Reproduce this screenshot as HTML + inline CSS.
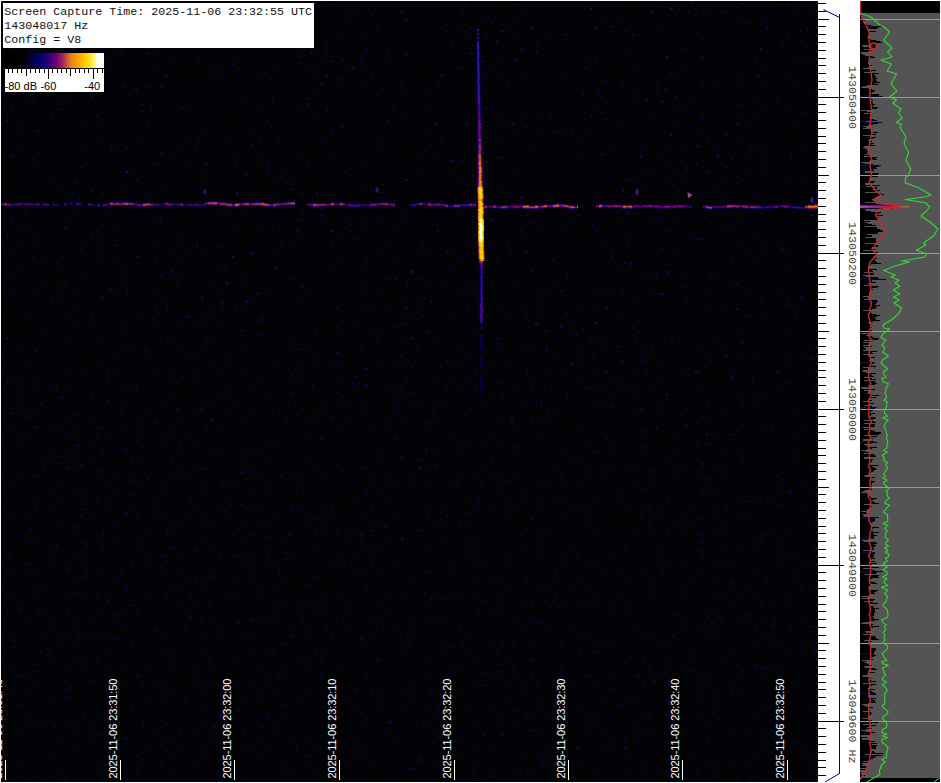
<!DOCTYPE html>
<html lang="en"><head><meta charset="utf-8"><title>Spectrogram capture</title>
<style>
html,body{margin:0;padding:0;background:#fff;}
body{width:941px;height:783px;overflow:hidden;position:relative;}
svg{position:absolute;left:0;top:0;display:block;}
.mono{font-family:"Liberation Mono","DejaVu Sans Mono",monospace;font-size:11.67px;fill:#111;}
.sans{font-family:"Liberation Sans","DejaVu Sans",sans-serif;font-size:11px;}
</style></head><body>
<svg width="941" height="783" viewBox="0 0 941 783">
<defs>
<linearGradient id="pal" x1="0" y1="0" x2="1" y2="0">
<stop offset="0" stop-color="#000"/><stop offset="0.19" stop-color="#020208"/>
<stop offset="0.345" stop-color="#00006e"/><stop offset="0.445" stop-color="#300078"/>
<stop offset="0.525" stop-color="#780078"/><stop offset="0.595" stop-color="#aa3250"/>
<stop offset="0.66" stop-color="#e6781e"/><stop offset="0.73" stop-color="#ffa000"/>
<stop offset="0.85" stop-color="#ffe100"/><stop offset="0.91" stop-color="#fff596"/>
<stop offset="0.94" stop-color="#fff"/><stop offset="1" stop-color="#fff"/>
</linearGradient>
<clipPath id="spc"><rect x="1" y="1" width="817" height="781"/></clipPath>
<clipPath id="pnl"><rect x="860" y="1" width="80" height="781"/></clipPath>
<filter id="noise" x="0" y="0" width="100%" height="100%" color-interpolation-filters="sRGB">
<feTurbulence type="fractalNoise" baseFrequency="0.2 0.27" numOctaves="2" seed="11" result="t"/>
<feColorMatrix in="t" type="matrix" values="0 0 0 0 0.07  0 0 0 0 0.07  0 0 0 0 0.56  0 0 4.2 0 -2.9"/>
</filter>
<filter id="haze" x="0" y="0" width="100%" height="100%" color-interpolation-filters="sRGB">
<feTurbulence type="fractalNoise" baseFrequency="0.17 0.24" numOctaves="2" seed="4" result="t"/>
<feColorMatrix in="t" type="matrix" values="0 0 0 0 0.05  0 0 0 0 0.05  0 0 0 0 0.5  0 0 1.9 0 -1.2"/>
</filter>
<linearGradient id="fade" x1="0" y1="0" x2="0" y2="1"><stop offset="0" stop-color="#fff"/><stop offset="0.42" stop-color="#fff"/><stop offset="0.75" stop-color="#777"/><stop offset="1" stop-color="#555"/></linearGradient>
<linearGradient id="fade2" x1="0" y1="0" x2="0" y2="1"><stop offset="0" stop-color="#666"/><stop offset="0.4" stop-color="#777"/><stop offset="0.75" stop-color="#fff"/><stop offset="1" stop-color="#fff"/></linearGradient>
<mask id="fm2" maskUnits="userSpaceOnUse" x="0" y="0" width="941" height="783"><rect x="1" y="1" width="817" height="781" fill="url(#fade2)"/></mask>
<mask id="fm" maskUnits="userSpaceOnUse" x="0" y="0" width="941" height="783"><rect x="1" y="1" width="817" height="781" fill="url(#fade)"/></mask>
<filter id="b1" x="-20%" y="-20%" width="140%" height="140%"><feGaussianBlur stdDeviation="0.65"/></filter>
<filter id="b2" x="-50%" y="-5%" width="200%" height="110%"><feGaussianBlur stdDeviation="1.2"/></filter>
</defs>
<rect x="1" y="1" width="817" height="781" fill="#030306"/>
<g clip-path="url(#spc)">
<g mask="url(#fm2)"><rect x="1" y="1" width="817" height="781" filter="url(#haze)"/></g>
<g mask="url(#fm)"><rect x="1" y="1" width="817" height="781" filter="url(#noise)"/></g>
<g filter="url(#b1)" opacity="0.9"><rect x="1" y="202.72" width="3" height="3.32" fill="#0b0070"/><rect x="4" y="202.31" width="3" height="3.75" fill="#2c0077"/><rect x="7" y="203.15" width="3" height="3.44" fill="#140072"/><rect x="10" y="203.39" width="2" height="3.07" fill="#000062"/><rect x="12" y="203.33" width="3" height="2.76" fill="#010141"/><rect x="15" y="202.91" width="3" height="3.33" fill="#0c0070"/><rect x="18" y="202.47" width="3" height="3.35" fill="#0d0071"/><rect x="21" y="202.31" width="3" height="2.93" fill="#010153"/><rect x="24" y="202.67" width="3" height="3.16" fill="#00006c"/><rect x="27" y="202.77" width="3" height="3.23" fill="#04006f"/><rect x="30" y="202.96" width="3" height="3.05" fill="#000061"/><rect x="33" y="202.79" width="3" height="2.81" fill="#010147"/><rect x="36" y="202.85" width="3" height="3.31" fill="#0a0070"/><rect x="39" y="202.65" width="1" height="3.09" fill="#000064"/><rect x="40" y="202.96" width="3" height="2.62" fill="#010133"/><rect x="43" y="202.68" width="3" height="3.14" fill="#00006a"/><rect x="46" y="203.30" width="3" height="3.21" fill="#02006e"/><rect x="49" y="203.58" width="3" height="2.60" fill="#010125"/><rect x="52" y="203.10" width="3" height="2.87" fill="#01014d"/><rect x="55" y="203.68" width="3" height="2.81" fill="#010147"/><rect x="58" y="203.76" width="3" height="2.60" fill="#01012a"/><rect x="61" y="203.64" width="3" height="2.60" fill="#01012b"/><rect x="64" y="202.84" width="3" height="3.22" fill="#03006f"/><rect x="67" y="202.67" width="3" height="2.60" fill="#020220"/><rect x="70" y="202.14" width="3" height="2.91" fill="#010151"/><rect x="73" y="202.49" width="3" height="2.60" fill="#010127"/><rect x="76" y="202.25" width="3" height="3.24" fill="#05006f"/><rect x="79" y="202.78" width="3" height="2.79" fill="#010144"/><rect x="82" y="203.09" width="3" height="2.60" fill="#010128"/><rect x="85" y="203.34" width="3" height="2.60" fill="#01012f"/><rect x="88" y="202.72" width="3" height="3.27" fill="#07006f"/><rect x="91" y="203.28" width="3" height="2.92" fill="#010153"/><rect x="94" y="203.38" width="3" height="2.60" fill="#01012d"/><rect x="97" y="203.63" width="3" height="3.30" fill="#0a0070"/><rect x="100" y="204.03" width="3" height="2.60" fill="#01012b"/><rect x="103" y="203.22" width="3" height="3.27" fill="#07006f"/><rect x="106" y="202.82" width="3" height="2.97" fill="#000058"/><rect x="109" y="203.09" width="1" height="2.76" fill="#010141"/><rect x="110" y="201.76" width="3" height="3.95" fill="#460078"/><rect x="113" y="202.29" width="3" height="3.58" fill="#1f0074"/><rect x="116" y="202.03" width="3" height="3.79" fill="#2f0078"/><rect x="119" y="202.54" width="3" height="3.63" fill="#230075"/><rect x="122" y="201.93" width="3" height="3.78" fill="#2e0078"/><rect x="125" y="201.87" width="3" height="3.97" fill="#490078"/><rect x="128" y="202.04" width="3" height="3.66" fill="#250076"/><rect x="131" y="202.21" width="3" height="3.67" fill="#260076"/><rect x="134" y="202.78" width="3" height="3.36" fill="#0e0071"/><rect x="137" y="203.17" width="3" height="3.37" fill="#0f0071"/><rect x="140" y="203.41" width="3" height="3.30" fill="#090070"/><rect x="143" y="202.87" width="3" height="3.98" fill="#4a0078"/><rect x="146" y="202.49" width="3" height="3.90" fill="#3e0078"/><rect x="149" y="202.29" width="1" height="3.92" fill="#410078"/><rect x="150" y="202.88" width="3" height="3.56" fill="#1d0074"/><rect x="153" y="203.32" width="3" height="3.04" fill="#000060"/><rect x="156" y="203.20" width="3" height="3.04" fill="#00005f"/><rect x="159" y="203.34" width="3" height="2.87" fill="#01014d"/><rect x="162" y="202.63" width="3" height="2.94" fill="#000055"/><rect x="165" y="202.07" width="3" height="3.57" fill="#1e0074"/><rect x="168" y="202.73" width="3" height="3.54" fill="#1c0074"/><rect x="171" y="202.48" width="3" height="3.25" fill="#05006f"/><rect x="174" y="202.74" width="3" height="2.77" fill="#010143"/><rect x="177" y="203.04" width="3" height="3.06" fill="#000061"/><rect x="180" y="202.87" width="3" height="3.56" fill="#1d0074"/><rect x="183" y="203.47" width="3" height="2.84" fill="#01014a"/><rect x="186" y="203.16" width="3" height="2.84" fill="#01014a"/><rect x="189" y="203.27" width="3" height="3.20" fill="#02006e"/><rect x="192" y="203.36" width="3" height="2.78" fill="#010143"/><rect x="195" y="203.21" width="3" height="3.33" fill="#0c0070"/><rect x="198" y="203.45" width="3" height="3.05" fill="#000060"/><rect x="201" y="203.40" width="3" height="2.87" fill="#01014d"/><rect x="204" y="203.18" width="1" height="3.39" fill="#100071"/><rect x="205" y="201.64" width="3" height="3.51" fill="#190073"/><rect x="208" y="201.34" width="3" height="3.88" fill="#3b0078"/><rect x="211" y="201.22" width="3" height="3.97" fill="#480078"/><rect x="214" y="201.32" width="3" height="4.10" fill="#5b0078"/><rect x="217" y="201.79" width="3" height="3.43" fill="#130072"/><rect x="220" y="202.10" width="3" height="3.82" fill="#320078"/><rect x="223" y="202.11" width="3" height="3.76" fill="#2d0077"/><rect x="226" y="202.76" width="3" height="3.84" fill="#360078"/><rect x="229" y="203.11" width="3" height="3.88" fill="#3c0078"/><rect x="232" y="203.53" width="3" height="3.44" fill="#150072"/><rect x="235" y="202.79" width="3" height="4.19" fill="#690078"/><rect x="238" y="202.63" width="2" height="3.87" fill="#3b0078"/><rect x="240" y="202.67" width="3" height="3.34" fill="#0c0071"/><rect x="243" y="202.10" width="3" height="3.75" fill="#2c0077"/><rect x="246" y="202.19" width="3" height="3.91" fill="#400078"/><rect x="249" y="202.59" width="3" height="3.37" fill="#0f0071"/><rect x="252" y="202.39" width="3" height="3.67" fill="#260076"/><rect x="255" y="201.98" width="3" height="3.83" fill="#350078"/><rect x="258" y="202.17" width="3" height="3.80" fill="#300078"/><rect x="261" y="202.10" width="3" height="4.04" fill="#530078"/><rect x="264" y="202.64" width="3" height="3.99" fill="#4c0078"/><rect x="267" y="203.17" width="3" height="3.82" fill="#330078"/><rect x="270" y="203.42" width="3" height="3.31" fill="#0a0070"/><rect x="273" y="203.17" width="3" height="3.81" fill="#320078"/><rect x="276" y="202.63" width="3" height="3.63" fill="#230075"/><rect x="279" y="202.74" width="3" height="3.44" fill="#140072"/><rect x="282" y="202.19" width="3" height="3.44" fill="#140072"/><rect x="285" y="202.09" width="3" height="3.59" fill="#200075"/><rect x="288" y="201.59" width="3" height="3.74" fill="#2c0077"/><rect x="291" y="201.52" width="3" height="3.95" fill="#460078"/><rect x="294" y="201.30" width="1" height="3.96" fill="#470078"/><rect x="295" y="203.39" width="3" height="2.60" fill="#02020c"/><rect x="298" y="203.63" width="3" height="2.60" fill="#010130"/><rect x="307" y="202.70" width="3" height="3.33" fill="#0c0070"/><rect x="310" y="203.44" width="3" height="3.24" fill="#05006f"/><rect x="313" y="203.01" width="3" height="3.99" fill="#4b0078"/><rect x="316" y="203.16" width="3" height="3.78" fill="#2f0078"/><rect x="319" y="203.16" width="3" height="3.59" fill="#200075"/><rect x="322" y="202.86" width="3" height="3.69" fill="#280076"/><rect x="325" y="203.05" width="3" height="3.36" fill="#0e0071"/><rect x="328" y="202.93" width="3" height="3.31" fill="#0a0070"/><rect x="331" y="202.07" width="3" height="3.96" fill="#470078"/><rect x="334" y="202.77" width="3" height="3.23" fill="#04006f"/><rect x="337" y="202.48" width="3" height="3.19" fill="#01006e"/><rect x="340" y="202.30" width="3" height="3.88" fill="#3c0078"/><rect x="343" y="202.25" width="2" height="3.33" fill="#0c0070"/><rect x="345" y="203.41" width="3" height="2.77" fill="#010143"/><rect x="348" y="203.42" width="3" height="3.36" fill="#0e0071"/><rect x="351" y="203.84" width="3" height="3.29" fill="#090070"/><rect x="354" y="204.13" width="3" height="3.27" fill="#07006f"/><rect x="357" y="203.55" width="3" height="3.35" fill="#0d0071"/><rect x="360" y="203.63" width="3" height="2.79" fill="#010144"/><rect x="363" y="203.56" width="3" height="3.03" fill="#00005f"/><rect x="366" y="203.94" width="3" height="2.81" fill="#010147"/><rect x="369" y="203.43" width="1" height="2.86" fill="#01014c"/><rect x="370" y="203.25" width="3" height="3.54" fill="#1c0074"/><rect x="373" y="202.94" width="3" height="3.63" fill="#230075"/><rect x="376" y="202.86" width="3" height="3.30" fill="#090070"/><rect x="379" y="202.41" width="3" height="3.42" fill="#130072"/><rect x="382" y="202.11" width="3" height="3.61" fill="#210075"/><rect x="385" y="202.38" width="3" height="3.76" fill="#2d0077"/><rect x="388" y="202.88" width="3" height="3.26" fill="#06006f"/><rect x="391" y="202.87" width="3" height="3.43" fill="#140072"/><rect x="394" y="203.17" width="1" height="3.67" fill="#260076"/><rect x="395" y="203.68" width="3" height="2.60" fill="#020211"/><rect x="398" y="203.75" width="3" height="2.60" fill="#020207"/><rect x="404" y="204.32" width="3" height="2.60" fill="#020207"/><rect x="410" y="203.74" width="3" height="3.02" fill="#00005d"/><rect x="413" y="203.46" width="3" height="3.18" fill="#00006e"/><rect x="416" y="202.88" width="3" height="2.99" fill="#00005a"/><rect x="419" y="202.08" width="3" height="3.73" fill="#2b0077"/><rect x="422" y="202.25" width="3" height="3.06" fill="#000061"/><rect x="425" y="202.78" width="3" height="3.01" fill="#00005c"/><rect x="428" y="202.59" width="3" height="3.79" fill="#300078"/><rect x="431" y="203.26" width="3" height="3.27" fill="#070070"/><rect x="434" y="202.87" width="3" height="3.37" fill="#0f0071"/><rect x="437" y="202.87" width="3" height="3.53" fill="#1b0074"/><rect x="440" y="203.13" width="3" height="3.16" fill="#00006c"/><rect x="443" y="203.03" width="2" height="3.26" fill="#07006f"/><rect x="445" y="204.00" width="3" height="3.68" fill="#270076"/><rect x="448" y="204.53" width="3" height="2.94" fill="#010154"/><rect x="451" y="204.37" width="3" height="2.95" fill="#000055"/><rect x="454" y="204.00" width="3" height="3.68" fill="#270076"/><rect x="457" y="203.97" width="3" height="3.72" fill="#2a0077"/><rect x="460" y="203.61" width="3" height="3.17" fill="#00006d"/><rect x="463" y="203.58" width="3" height="3.32" fill="#0b0070"/><rect x="466" y="203.38" width="3" height="3.13" fill="#000069"/><rect x="469" y="203.02" width="3" height="3.58" fill="#1f0074"/><rect x="472" y="203.23" width="3" height="3.45" fill="#150072"/><rect x="475" y="202.79" width="1" height="3.74" fill="#2b0077"/><rect x="484" y="204.99" width="3" height="3.68" fill="#260076"/><rect x="487" y="205.05" width="3" height="3.08" fill="#000064"/><rect x="490" y="205.25" width="3" height="3.18" fill="#00006e"/><rect x="493" y="204.79" width="3" height="3.78" fill="#2f0078"/><rect x="496" y="205.37" width="3" height="3.18" fill="#00006e"/><rect x="499" y="205.50" width="3" height="3.37" fill="#0f0071"/><rect x="502" y="205.39" width="3" height="3.87" fill="#3a0078"/><rect x="505" y="205.11" width="3" height="3.62" fill="#220075"/><rect x="508" y="205.37" width="3" height="3.05" fill="#000061"/><rect x="511" y="204.87" width="3" height="3.35" fill="#0d0071"/><rect x="514" y="205.01" width="3" height="3.55" fill="#1d0074"/><rect x="517" y="205.18" width="3" height="3.48" fill="#170073"/><rect x="520" y="204.64" width="3" height="3.42" fill="#130072"/><rect x="523" y="204.76" width="3" height="4.12" fill="#5f0078"/><rect x="526" y="204.54" width="3" height="4.19" fill="#690078"/><rect x="529" y="205.31" width="3" height="3.81" fill="#320078"/><rect x="532" y="205.41" width="3" height="3.82" fill="#330078"/><rect x="535" y="204.78" width="3" height="4.20" fill="#6a0078"/><rect x="538" y="205.46" width="3" height="3.40" fill="#110072"/><rect x="541" y="204.72" width="3" height="3.85" fill="#380078"/><rect x="544" y="204.30" width="3" height="4.07" fill="#580078"/><rect x="547" y="204.36" width="3" height="3.46" fill="#160073"/><rect x="550" y="204.32" width="3" height="3.38" fill="#100071"/><rect x="553" y="203.99" width="3" height="4.03" fill="#510078"/><rect x="556" y="203.57" width="3" height="4.19" fill="#680078"/><rect x="559" y="203.87" width="3" height="3.50" fill="#190073"/><rect x="562" y="203.80" width="3" height="3.85" fill="#370078"/><rect x="565" y="204.21" width="3" height="3.93" fill="#430078"/><rect x="568" y="204.87" width="3" height="3.85" fill="#380078"/><rect x="571" y="205.28" width="3" height="4.04" fill="#520078"/><rect x="574" y="205.37" width="3" height="3.48" fill="#170073"/><rect x="577" y="204.91" width="1" height="4.18" fill="#680078"/><rect x="596" y="204.67" width="3" height="3.50" fill="#190073"/><rect x="599" y="204.10" width="3" height="4.10" fill="#5c0078"/><rect x="602" y="204.24" width="3" height="3.29" fill="#090070"/><rect x="605" y="204.41" width="3" height="3.33" fill="#0c0070"/><rect x="608" y="204.80" width="3" height="3.55" fill="#1d0074"/><rect x="611" y="204.47" width="3" height="3.46" fill="#160073"/><rect x="614" y="204.31" width="3" height="3.68" fill="#270076"/><rect x="617" y="204.50" width="3" height="3.55" fill="#1d0074"/><rect x="620" y="205.02" width="3" height="3.43" fill="#140072"/><rect x="623" y="204.71" width="3" height="4.09" fill="#5a0078"/><rect x="626" y="204.75" width="3" height="3.83" fill="#350078"/><rect x="629" y="204.71" width="3" height="4.07" fill="#580078"/><rect x="632" y="205.23" width="3" height="3.31" fill="#0a0070"/><rect x="635" y="204.52" width="3" height="3.46" fill="#160073"/><rect x="638" y="204.88" width="2" height="3.30" fill="#090070"/><rect x="640" y="204.88" width="3" height="3.10" fill="#000066"/><rect x="643" y="204.26" width="3" height="3.40" fill="#110072"/><rect x="646" y="204.59" width="3" height="3.40" fill="#110072"/><rect x="649" y="204.17" width="3" height="3.61" fill="#210075"/><rect x="652" y="204.63" width="3" height="3.29" fill="#080070"/><rect x="655" y="204.65" width="3" height="3.52" fill="#1b0074"/><rect x="658" y="205.36" width="3" height="3.36" fill="#0e0071"/><rect x="661" y="205.57" width="3" height="3.09" fill="#000065"/><rect x="664" y="204.95" width="3" height="3.57" fill="#1e0074"/><rect x="667" y="204.91" width="3" height="3.64" fill="#230075"/><rect x="670" y="205.04" width="3" height="3.19" fill="#01006e"/><rect x="673" y="204.98" width="3" height="3.48" fill="#170073"/><rect x="676" y="204.58" width="3" height="3.44" fill="#140072"/><rect x="679" y="204.83" width="3" height="3.55" fill="#1d0074"/><rect x="682" y="204.52" width="3" height="3.38" fill="#100071"/><rect x="685" y="204.65" width="3" height="3.02" fill="#00005d"/><rect x="688" y="205.17" width="3" height="2.85" fill="#01014b"/><rect x="691" y="205.34" width="1" height="3.14" fill="#00006a"/><rect x="703" y="204.94" width="3" height="3.45" fill="#150072"/><rect x="706" y="205.36" width="3" height="3.89" fill="#3d0078"/><rect x="709" y="205.78" width="3" height="3.90" fill="#3f0078"/><rect x="712" y="205.53" width="3" height="3.22" fill="#03006f"/><rect x="715" y="205.08" width="3" height="3.32" fill="#0b0070"/><rect x="718" y="205.36" width="3" height="3.17" fill="#00006d"/><rect x="721" y="205.40" width="3" height="3.24" fill="#05006f"/><rect x="724" y="204.97" width="3" height="3.40" fill="#110072"/><rect x="727" y="204.35" width="3" height="3.91" fill="#400078"/><rect x="730" y="204.42" width="3" height="3.84" fill="#350078"/><rect x="733" y="204.17" width="3" height="3.65" fill="#240076"/><rect x="736" y="204.62" width="3" height="3.72" fill="#2a0077"/><rect x="739" y="204.82" width="3" height="3.24" fill="#05006f"/><rect x="742" y="204.69" width="3" height="3.64" fill="#230075"/><rect x="745" y="204.92" width="3" height="3.72" fill="#2a0077"/><rect x="748" y="205.39" width="3" height="3.34" fill="#0d0071"/><rect x="751" y="205.23" width="3" height="3.74" fill="#2b0077"/><rect x="754" y="205.51" width="3" height="3.58" fill="#1f0074"/><rect x="757" y="205.19" width="3" height="3.48" fill="#180073"/><rect x="760" y="205.88" width="3" height="3.33" fill="#0b0070"/><rect x="763" y="205.97" width="3" height="2.71" fill="#01013d"/><rect x="766" y="205.58" width="3" height="3.16" fill="#00006c"/><rect x="769" y="205.70" width="3" height="2.78" fill="#010144"/><rect x="772" y="205.26" width="3" height="3.26" fill="#06006f"/><rect x="775" y="205.07" width="3" height="3.47" fill="#160073"/><rect x="778" y="205.17" width="3" height="2.66" fill="#010137"/><rect x="781" y="204.56" width="3" height="3.26" fill="#06006f"/><rect x="784" y="204.90" width="3" height="3.49" fill="#180073"/><rect x="787" y="204.87" width="3" height="3.31" fill="#0a0070"/><rect x="790" y="205.84" width="3" height="2.66" fill="#010136"/><rect x="793" y="205.68" width="3" height="3.09" fill="#000065"/><rect x="796" y="206.04" width="3" height="3.10" fill="#000066"/><rect x="799" y="206.31" width="3" height="2.97" fill="#000058"/><rect x="802" y="206.66" width="3" height="2.79" fill="#010145"/><rect x="805" y="205.07" width="3" height="3.91" fill="#3f0078"/><rect x="808" y="204.52" width="3" height="4.40" fill="#830b6f"/><rect x="811" y="204.86" width="3" height="4.24" fill="#6f0078"/><rect x="814" y="204.30" width="3" height="4.40" fill="#8b1369"/><rect x="817" y="204.35" width="1" height="4.32" fill="#7b0376"/></g>
<g filter="url(#b1)"><rect x="1" y="203.58" width="3" height="1.6" fill="#6b0078"/><rect x="4" y="203.39" width="3" height="1.6" fill="#9f2759"/><rect x="7" y="204.07" width="3" height="1.6" fill="#7b0376"/><rect x="10" y="204.12" width="2" height="1.6" fill="#460078"/><rect x="12" y="203.90" width="3" height="1.6" fill="#230075"/><rect x="15" y="203.77" width="3" height="1.6" fill="#6c0078"/><rect x="18" y="203.34" width="3" height="1.6" fill="#6f0078"/><rect x="21" y="202.97" width="3" height="1.6" fill="#310078"/><rect x="24" y="203.45" width="3" height="1.6" fill="#530078"/><rect x="27" y="203.59" width="3" height="1.6" fill="#5e0078"/><rect x="30" y="203.68" width="3" height="1.6" fill="#440078"/><rect x="33" y="203.40" width="3" height="1.6" fill="#280076"/><rect x="36" y="203.70" width="3" height="1.6" fill="#680078"/><rect x="39" y="203.39" width="1" height="1.6" fill="#480078"/><rect x="43" y="203.45" width="3" height="1.6" fill="#510078"/><rect x="46" y="204.11" width="3" height="1.6" fill="#5a0078"/><rect x="52" y="203.74" width="3" height="1.6" fill="#2c0077"/><rect x="55" y="204.28" width="3" height="1.6" fill="#280076"/><rect x="64" y="203.65" width="3" height="1.6" fill="#5b0078"/><rect x="70" y="202.79" width="3" height="1.6" fill="#2f0078"/><rect x="76" y="203.07" width="3" height="1.6" fill="#5f0078"/><rect x="79" y="203.38" width="3" height="1.6" fill="#260076"/><rect x="88" y="203.56" width="3" height="1.6" fill="#630078"/><rect x="91" y="203.94" width="3" height="1.6" fill="#310078"/><rect x="97" y="204.49" width="3" height="1.6" fill="#680078"/><rect x="103" y="204.05" width="3" height="1.6" fill="#620078"/><rect x="106" y="203.51" width="3" height="1.6" fill="#380078"/><rect x="109" y="203.66" width="1" height="1.6" fill="#240075"/><rect x="110" y="202.93" width="3" height="1.6" fill="#ba4443"/><rect x="113" y="203.28" width="3" height="1.6" fill="#8b1369"/><rect x="116" y="203.13" width="3" height="1.6" fill="#a32b56"/><rect x="119" y="203.56" width="3" height="1.6" fill="#911964"/><rect x="122" y="203.02" width="3" height="1.6" fill="#a22a56"/><rect x="125" y="203.06" width="3" height="1.6" fill="#bd4840"/><rect x="128" y="203.07" width="3" height="1.6" fill="#941c62"/><rect x="131" y="203.24" width="3" height="1.6" fill="#951d61"/><rect x="134" y="203.66" width="3" height="1.6" fill="#700078"/><rect x="137" y="204.06" width="3" height="1.6" fill="#720078"/><rect x="140" y="204.26" width="3" height="1.6" fill="#680078"/><rect x="143" y="204.06" width="3" height="1.6" fill="#be4940"/><rect x="146" y="203.64" width="3" height="1.6" fill="#b13a4a"/><rect x="149" y="203.45" width="1" height="1.6" fill="#b53f47"/><rect x="150" y="203.85" width="3" height="1.6" fill="#88106b"/><rect x="153" y="204.04" width="3" height="1.6" fill="#420078"/><rect x="156" y="203.92" width="3" height="1.6" fill="#420078"/><rect x="159" y="203.98" width="3" height="1.6" fill="#2c0077"/><rect x="162" y="203.30" width="3" height="1.6" fill="#340078"/><rect x="165" y="203.05" width="3" height="1.6" fill="#8a126a"/><rect x="168" y="203.70" width="3" height="1.6" fill="#870f6c"/><rect x="171" y="203.30" width="3" height="1.6" fill="#600078"/><rect x="174" y="203.32" width="3" height="1.6" fill="#250076"/><rect x="177" y="203.77" width="3" height="1.6" fill="#440078"/><rect x="180" y="203.85" width="3" height="1.6" fill="#89116b"/><rect x="183" y="204.09" width="3" height="1.6" fill="#2a0077"/><rect x="186" y="203.78" width="3" height="1.6" fill="#2a0077"/><rect x="189" y="204.08" width="3" height="1.6" fill="#590078"/><rect x="192" y="203.95" width="3" height="1.6" fill="#250076"/><rect x="195" y="204.07" width="3" height="1.6" fill="#6c0078"/><rect x="198" y="204.18" width="3" height="1.6" fill="#440078"/><rect x="201" y="204.03" width="3" height="1.6" fill="#2c0077"/><rect x="204" y="204.07" width="1" height="1.6" fill="#740078"/><rect x="205" y="202.60" width="3" height="1.6" fill="#830b70"/><rect x="208" y="202.48" width="3" height="1.6" fill="#af374c"/><rect x="211" y="202.40" width="3" height="1.6" fill="#bc4741"/><rect x="214" y="202.57" width="3" height="1.6" fill="#cf5d31"/><rect x="217" y="202.71" width="3" height="1.6" fill="#7a0276"/><rect x="220" y="203.21" width="3" height="1.6" fill="#a62e53"/><rect x="223" y="203.19" width="3" height="1.6" fill="#a02858"/><rect x="226" y="203.88" width="3" height="1.6" fill="#a93151"/><rect x="229" y="204.25" width="3" height="1.6" fill="#af384b"/><rect x="232" y="204.45" width="3" height="1.6" fill="#7c0475"/><rect x="235" y="204.08" width="3" height="1.6" fill="#dd6e25"/><rect x="238" y="203.77" width="2" height="1.6" fill="#ae374d"/><rect x="240" y="203.53" width="3" height="1.6" fill="#6d0078"/><rect x="243" y="203.18" width="3" height="1.6" fill="#9f2759"/><rect x="246" y="203.35" width="3" height="1.6" fill="#b33d48"/><rect x="249" y="203.47" width="3" height="1.6" fill="#720078"/><rect x="252" y="203.43" width="3" height="1.6" fill="#961e60"/><rect x="255" y="203.10" width="3" height="1.6" fill="#a83051"/><rect x="258" y="203.27" width="3" height="1.6" fill="#a52d54"/><rect x="261" y="203.32" width="3" height="1.6" fill="#c75438"/><rect x="264" y="203.84" width="3" height="1.6" fill="#c04b3e"/><rect x="267" y="204.29" width="3" height="1.6" fill="#a72f52"/><rect x="270" y="204.27" width="3" height="1.6" fill="#690078"/><rect x="273" y="204.27" width="3" height="1.6" fill="#a62e53"/><rect x="276" y="203.64" width="3" height="1.6" fill="#911964"/><rect x="279" y="203.66" width="3" height="1.6" fill="#7b0375"/><rect x="282" y="203.11" width="3" height="1.6" fill="#7b0376"/><rect x="285" y="203.09" width="3" height="1.6" fill="#8c1468"/><rect x="288" y="202.66" width="3" height="1.6" fill="#9e265a"/><rect x="291" y="202.70" width="3" height="1.6" fill="#ba4443"/><rect x="294" y="202.48" width="1" height="1.6" fill="#bb4542"/><rect x="307" y="203.57" width="3" height="1.6" fill="#6c0078"/><rect x="310" y="204.26" width="3" height="1.6" fill="#5f0078"/><rect x="313" y="204.21" width="3" height="1.6" fill="#bf4a3f"/><rect x="316" y="204.26" width="3" height="1.6" fill="#a32b56"/><rect x="319" y="204.16" width="3" height="1.6" fill="#8d1568"/><rect x="322" y="203.91" width="3" height="1.6" fill="#98205e"/><rect x="325" y="203.93" width="3" height="1.6" fill="#710078"/><rect x="328" y="203.78" width="3" height="1.6" fill="#690078"/><rect x="331" y="203.25" width="3" height="1.6" fill="#bb4542"/><rect x="334" y="203.58" width="3" height="1.6" fill="#5d0078"/><rect x="337" y="203.28" width="3" height="1.6" fill="#580078"/><rect x="340" y="203.44" width="3" height="1.6" fill="#af374c"/><rect x="343" y="203.11" width="2" height="1.6" fill="#6c0078"/><rect x="345" y="204.00" width="3" height="1.6" fill="#250076"/><rect x="348" y="204.30" width="3" height="1.6" fill="#700078"/><rect x="351" y="204.68" width="3" height="1.6" fill="#660078"/><rect x="354" y="204.97" width="3" height="1.6" fill="#630078"/><rect x="357" y="204.42" width="3" height="1.6" fill="#6f0078"/><rect x="360" y="204.22" width="3" height="1.6" fill="#260076"/><rect x="363" y="204.28" width="3" height="1.6" fill="#410078"/><rect x="366" y="204.55" width="3" height="1.6" fill="#280076"/><rect x="369" y="204.06" width="1" height="1.6" fill="#2b0077"/><rect x="370" y="204.22" width="3" height="1.6" fill="#870f6c"/><rect x="373" y="203.96" width="3" height="1.6" fill="#911964"/><rect x="376" y="203.71" width="3" height="1.6" fill="#680078"/><rect x="379" y="203.32" width="3" height="1.6" fill="#790177"/><rect x="382" y="203.12" width="3" height="1.6" fill="#8f1766"/><rect x="385" y="203.46" width="3" height="1.6" fill="#a02858"/><rect x="388" y="203.71" width="3" height="1.6" fill="#620078"/><rect x="391" y="203.79" width="3" height="1.6" fill="#7a0276"/><rect x="394" y="204.20" width="1" height="1.6" fill="#951d61"/><rect x="410" y="204.45" width="3" height="1.6" fill="#3e0078"/><rect x="413" y="204.25" width="3" height="1.6" fill="#560078"/><rect x="416" y="203.58" width="3" height="1.6" fill="#3b0078"/><rect x="419" y="203.15" width="3" height="1.6" fill="#9c245b"/><rect x="422" y="202.98" width="3" height="1.6" fill="#450078"/><rect x="425" y="203.49" width="3" height="1.6" fill="#3e0078"/><rect x="428" y="203.69" width="3" height="1.6" fill="#a42c55"/><rect x="431" y="204.10" width="3" height="1.6" fill="#640078"/><rect x="434" y="203.75" width="3" height="1.6" fill="#720078"/><rect x="437" y="203.83" width="3" height="1.6" fill="#850d6d"/><rect x="440" y="203.91" width="3" height="1.6" fill="#540078"/><rect x="443" y="203.86" width="2" height="1.6" fill="#620078"/><rect x="445" y="205.05" width="3" height="1.6" fill="#971f5f"/><rect x="448" y="205.20" width="3" height="1.6" fill="#330078"/><rect x="451" y="205.04" width="3" height="1.6" fill="#340078"/><rect x="454" y="205.04" width="3" height="1.6" fill="#971f5f"/><rect x="457" y="205.03" width="3" height="1.6" fill="#9b235c"/><rect x="460" y="204.39" width="3" height="1.6" fill="#540078"/><rect x="463" y="204.44" width="3" height="1.6" fill="#6b0078"/><rect x="466" y="204.15" width="3" height="1.6" fill="#4f0078"/><rect x="469" y="204.01" width="3" height="1.6" fill="#8b1369"/><rect x="472" y="204.16" width="3" height="1.6" fill="#7c0475"/><rect x="475" y="203.86" width="1" height="1.6" fill="#9d255a"/><rect x="484" y="206.03" width="3" height="1.6" fill="#961e60"/><rect x="487" y="205.79" width="3" height="1.6" fill="#480078"/><rect x="490" y="206.04" width="3" height="1.6" fill="#560078"/><rect x="493" y="205.88" width="3" height="1.6" fill="#a32b56"/><rect x="496" y="206.16" width="3" height="1.6" fill="#550078"/><rect x="499" y="206.39" width="3" height="1.6" fill="#710078"/><rect x="502" y="206.52" width="3" height="1.6" fill="#ad354e"/><rect x="505" y="206.12" width="3" height="1.6" fill="#901865"/><rect x="508" y="206.10" width="3" height="1.6" fill="#440078"/><rect x="511" y="205.74" width="3" height="1.6" fill="#6e0078"/><rect x="514" y="205.98" width="3" height="1.6" fill="#88106c"/><rect x="517" y="206.13" width="3" height="1.6" fill="#800872"/><rect x="520" y="205.56" width="3" height="1.6" fill="#790177"/><rect x="523" y="206.02" width="3" height="1.6" fill="#d3612e"/><rect x="526" y="205.83" width="3" height="1.6" fill="#dd6e25"/><rect x="529" y="206.42" width="3" height="1.6" fill="#a62e53"/><rect x="532" y="206.52" width="3" height="1.6" fill="#a72f53"/><rect x="535" y="206.08" width="3" height="1.6" fill="#de6e25"/><rect x="538" y="206.36" width="3" height="1.6" fill="#760078"/><rect x="541" y="205.85" width="3" height="1.6" fill="#ab334f"/><rect x="544" y="205.54" width="3" height="1.6" fill="#cb5934"/><rect x="547" y="205.29" width="3" height="1.6" fill="#7e0674"/><rect x="550" y="205.21" width="3" height="1.6" fill="#730078"/><rect x="553" y="205.20" width="3" height="1.6" fill="#c5513a"/><rect x="556" y="204.86" width="3" height="1.6" fill="#dc6d26"/><rect x="559" y="204.82" width="3" height="1.6" fill="#820a70"/><rect x="562" y="204.93" width="3" height="1.6" fill="#aa3250"/><rect x="565" y="205.37" width="3" height="1.6" fill="#b64046"/><rect x="568" y="206.00" width="3" height="1.6" fill="#ab334f"/><rect x="571" y="206.49" width="3" height="1.6" fill="#c65339"/><rect x="574" y="206.31" width="3" height="1.6" fill="#800872"/><rect x="577" y="206.20" width="1" height="1.6" fill="#dc6c26"/><rect x="596" y="205.62" width="3" height="1.6" fill="#820a70"/><rect x="599" y="205.35" width="3" height="1.6" fill="#d05e30"/><rect x="602" y="205.08" width="3" height="1.6" fill="#660078"/><rect x="605" y="205.28" width="3" height="1.6" fill="#6c0078"/><rect x="608" y="205.77" width="3" height="1.6" fill="#88106b"/><rect x="611" y="205.40" width="3" height="1.6" fill="#7d0574"/><rect x="614" y="205.36" width="3" height="1.6" fill="#971f5f"/><rect x="617" y="205.47" width="3" height="1.6" fill="#88106c"/><rect x="620" y="205.93" width="3" height="1.6" fill="#7a0276"/><rect x="623" y="205.95" width="3" height="1.6" fill="#ce5c32"/><rect x="626" y="205.87" width="3" height="1.6" fill="#a83051"/><rect x="629" y="205.95" width="3" height="1.6" fill="#cc5934"/><rect x="632" y="206.08" width="3" height="1.6" fill="#680078"/><rect x="635" y="205.45" width="3" height="1.6" fill="#7e0674"/><rect x="638" y="205.72" width="2" height="1.6" fill="#670078"/><rect x="640" y="205.63" width="3" height="1.6" fill="#4b0078"/><rect x="643" y="205.16" width="3" height="1.6" fill="#760078"/><rect x="646" y="205.49" width="3" height="1.6" fill="#760078"/><rect x="649" y="205.17" width="3" height="1.6" fill="#8e1666"/><rect x="652" y="205.47" width="3" height="1.6" fill="#660078"/><rect x="655" y="205.61" width="3" height="1.6" fill="#850d6e"/><rect x="658" y="206.24" width="3" height="1.6" fill="#710078"/><rect x="661" y="206.32" width="3" height="1.6" fill="#490078"/><rect x="664" y="205.94" width="3" height="1.6" fill="#89116a"/><rect x="667" y="205.93" width="3" height="1.6" fill="#921a64"/><rect x="670" y="205.84" width="3" height="1.6" fill="#570078"/><rect x="673" y="205.92" width="3" height="1.6" fill="#800872"/><rect x="676" y="205.50" width="3" height="1.6" fill="#7b0376"/><rect x="679" y="205.81" width="3" height="1.6" fill="#88106b"/><rect x="682" y="205.41" width="3" height="1.6" fill="#730078"/><rect x="685" y="205.35" width="3" height="1.6" fill="#3e0078"/><rect x="688" y="205.79" width="3" height="1.6" fill="#2a0077"/><rect x="691" y="206.11" width="1" height="1.6" fill="#510078"/><rect x="703" y="205.87" width="3" height="1.6" fill="#7c0475"/><rect x="706" y="206.50" width="3" height="1.6" fill="#b0394b"/><rect x="709" y="206.93" width="3" height="1.6" fill="#b23b4a"/><rect x="712" y="206.34" width="3" height="1.6" fill="#5b0078"/><rect x="715" y="205.94" width="3" height="1.6" fill="#6b0078"/><rect x="718" y="206.15" width="3" height="1.6" fill="#550078"/><rect x="721" y="206.22" width="3" height="1.6" fill="#5f0078"/><rect x="724" y="205.87" width="3" height="1.6" fill="#760078"/><rect x="727" y="205.51" width="3" height="1.6" fill="#b33d48"/><rect x="730" y="205.54" width="3" height="1.6" fill="#a93151"/><rect x="733" y="205.20" width="3" height="1.6" fill="#931b63"/><rect x="736" y="205.68" width="3" height="1.6" fill="#9b235c"/><rect x="739" y="205.65" width="3" height="1.6" fill="#5f0078"/><rect x="742" y="205.70" width="3" height="1.6" fill="#921a63"/><rect x="745" y="205.98" width="3" height="1.6" fill="#9c245c"/><rect x="748" y="206.26" width="3" height="1.6" fill="#6e0078"/><rect x="751" y="206.30" width="3" height="1.6" fill="#9e265a"/><rect x="754" y="206.50" width="3" height="1.6" fill="#8b1368"/><rect x="757" y="206.13" width="3" height="1.6" fill="#800872"/><rect x="760" y="206.75" width="3" height="1.6" fill="#6b0078"/><rect x="763" y="206.53" width="3" height="1.6" fill="#200075"/><rect x="766" y="206.36" width="3" height="1.6" fill="#530078"/><rect x="769" y="206.29" width="3" height="1.6" fill="#250076"/><rect x="772" y="206.09" width="3" height="1.6" fill="#610078"/><rect x="775" y="206.00" width="3" height="1.6" fill="#7e0673"/><rect x="778" y="205.70" width="3" height="1.6" fill="#1c0074"/><rect x="781" y="205.39" width="3" height="1.6" fill="#620078"/><rect x="784" y="205.84" width="3" height="1.6" fill="#800871"/><rect x="787" y="205.73" width="3" height="1.6" fill="#690078"/><rect x="790" y="206.37" width="3" height="1.6" fill="#1c0074"/><rect x="793" y="206.43" width="3" height="1.6" fill="#490078"/><rect x="796" y="206.79" width="3" height="1.6" fill="#4a0078"/><rect x="799" y="206.99" width="3" height="1.6" fill="#380078"/><rect x="802" y="207.26" width="3" height="1.6" fill="#260076"/><rect x="805" y="206.22" width="3" height="1.6" fill="#b33c49"/><rect x="808" y="205.92" width="3" height="1.6" fill="#ee8514"/><rect x="811" y="206.18" width="3" height="1.6" fill="#e47520"/><rect x="814" y="205.70" width="3" height="1.6" fill="#f28c0f"/><rect x="817" y="205.71" width="1" height="1.6" fill="#ea7e19"/></g>
<g filter="url(#b1)"><ellipse cx="637" cy="192" rx="1.3" ry="3.6" fill="#381a88"/><path d="M687.5 192 L692.5 195 L688 198.5 Z" fill="#94448e"/><ellipse cx="205" cy="192" rx="2" ry="2.6" fill="#2a1670" opacity="0.8"/><ellipse cx="377" cy="190" rx="1.6" ry="3" fill="#20146a"/><ellipse cx="812" cy="200" rx="1.5" ry="3" fill="#3a1a90"/></g>
<g filter="url(#b1)"><rect x="476.12" y="29" width="4.00" height="2" fill="#020212"/><rect x="476.22" y="33" width="4.00" height="2" fill="#020215"/><rect x="475.93" y="37" width="4.00" height="2" fill="#010139"/><rect x="476.26" y="41" width="4.00" height="2" fill="#010122"/><rect x="475.90" y="43" width="4.00" height="2" fill="#010127"/><rect x="475.94" y="45" width="4.00" height="2" fill="#010149"/><rect x="476.40" y="47" width="4.00" height="2" fill="#010142"/><rect x="476.17" y="49" width="4.00" height="2" fill="#01012c"/><rect x="476.40" y="51" width="4.00" height="2" fill="#01012b"/><rect x="476.46" y="53" width="4.00" height="2" fill="#01014d"/><rect x="476.36" y="55" width="4.00" height="2" fill="#010138"/><rect x="476.50" y="57" width="4.00" height="2" fill="#010134"/><rect x="476.25" y="59" width="4.00" height="2" fill="#01012e"/><rect x="476.29" y="61" width="4.00" height="2" fill="#010141"/><rect x="476.60" y="63" width="4.00" height="2" fill="#01014f"/><rect x="476.21" y="65" width="4.00" height="2" fill="#01012b"/><rect x="476.31" y="67" width="4.00" height="2" fill="#01013e"/><rect x="476.62" y="69" width="4.00" height="2" fill="#01013a"/><rect x="476.53" y="71" width="4.00" height="2" fill="#010148"/><rect x="476.81" y="73" width="4.00" height="2" fill="#01013c"/><rect x="476.56" y="75" width="4.00" height="2" fill="#01012a"/><rect x="476.60" y="77" width="4.00" height="2" fill="#010149"/><rect x="476.47" y="79" width="4.00" height="2" fill="#01014e"/><rect x="476.67" y="81" width="4.00" height="2" fill="#010129"/><rect x="476.70" y="83" width="4.00" height="2" fill="#01013a"/><rect x="476.78" y="85" width="4.00" height="2" fill="#01012f"/><rect x="477.11" y="87" width="4.00" height="2" fill="#01014e"/><rect x="476.73" y="89" width="4.00" height="2" fill="#010142"/><rect x="476.70" y="91" width="4.00" height="2" fill="#010140"/><rect x="477.12" y="93" width="4.00" height="2" fill="#010129"/><rect x="476.77" y="95" width="4.00" height="2" fill="#010133"/><rect x="476.78" y="97" width="4.00" height="2" fill="#010152"/><rect x="476.82" y="99" width="4.00" height="2" fill="#01013f"/><rect x="477.17" y="101" width="4.00" height="2" fill="#000064"/><rect x="476.84" y="103" width="4.00" height="2" fill="#01014b"/><rect x="476.91" y="105" width="4.00" height="2" fill="#03006f"/><rect x="477.27" y="107" width="4.00" height="2" fill="#02006e"/><rect x="477.18" y="109" width="4.00" height="2" fill="#03006f"/><rect x="477.09" y="111" width="4.00" height="2" fill="#01006e"/><rect x="477.04" y="113" width="4.00" height="2" fill="#0a0070"/><rect x="477.14" y="115" width="4.00" height="2" fill="#07006f"/><rect x="477.55" y="117" width="4.00" height="2" fill="#06006f"/><rect x="477.44" y="119" width="4.00" height="2" fill="#0e0071"/><rect x="477.07" y="121" width="4.01" height="2" fill="#130072"/><rect x="477.62" y="123" width="4.04" height="2" fill="#1a0073"/><rect x="477.43" y="125" width="4.06" height="2" fill="#1b0074"/><rect x="477.70" y="127" width="4.08" height="2" fill="#200075"/><rect x="477.25" y="129" width="4.11" height="2" fill="#100071"/><rect x="477.18" y="131" width="4.13" height="2" fill="#140072"/><rect x="477.24" y="133" width="4.16" height="2" fill="#130072"/><rect x="477.45" y="135" width="4.18" height="2" fill="#0d0071"/><rect x="477.52" y="137" width="4.21" height="2" fill="#100071"/><rect x="477.68" y="139" width="4.23" height="2" fill="#2d0077"/><rect x="477.70" y="141" width="4.25" height="2" fill="#160073"/><rect x="477.77" y="143" width="4.28" height="2" fill="#1e0074"/><rect x="477.63" y="145" width="4.30" height="2" fill="#310078"/><rect x="477.91" y="147" width="4.33" height="2" fill="#2d0077"/><rect x="477.88" y="149" width="4.35" height="2" fill="#2a0077"/><rect x="477.42" y="151" width="4.38" height="2" fill="#2d0077"/><rect x="477.41" y="153" width="4.40" height="2" fill="#320078"/><rect x="477.51" y="155" width="4.42" height="2" fill="#5e0078"/><rect x="477.59" y="157" width="4.45" height="2" fill="#540078"/><rect x="477.91" y="159" width="4.47" height="2" fill="#4d0078"/><rect x="477.62" y="161" width="4.50" height="2" fill="#5f0078"/><rect x="477.57" y="163" width="4.52" height="2" fill="#710078"/><rect x="477.92" y="165" width="4.55" height="2" fill="#4d0078"/><rect x="477.98" y="167" width="4.57" height="2" fill="#7f0772"/><rect x="478.10" y="169" width="4.59" height="2" fill="#7a0276"/><rect x="477.90" y="171" width="4.62" height="2" fill="#88106b"/><rect x="477.93" y="173" width="4.64" height="2" fill="#610078"/><rect x="478.02" y="175" width="4.67" height="2" fill="#730078"/><rect x="477.66" y="177" width="4.69" height="2" fill="#720078"/><rect x="477.72" y="179" width="4.72" height="2" fill="#6b0078"/><rect x="478.07" y="181" width="4.74" height="2" fill="#8a1269"/><rect x="477.87" y="183" width="4.76" height="2" fill="#830b6f"/><rect x="477.96" y="185" width="4.79" height="2" fill="#8f1766"/><rect x="477.34" y="187" width="5.80" height="2" fill="#b74145"/><rect x="477.52" y="189" width="5.80" height="2" fill="#db6b27"/><rect x="477.41" y="191" width="5.80" height="2" fill="#be493f"/><rect x="477.60" y="193" width="5.80" height="2" fill="#c14c3d"/><rect x="477.79" y="195" width="5.80" height="2" fill="#c3503b"/><rect x="477.75" y="197" width="5.80" height="2" fill="#c24e3c"/><rect x="477.49" y="199" width="5.80" height="2" fill="#710078"/><rect x="477.48" y="201" width="5.80" height="2" fill="#a22a56"/><rect x="477.97" y="203" width="5.80" height="2" fill="#b33d48"/><rect x="477.67" y="205" width="5.80" height="2" fill="#ac354e"/><rect x="478.10" y="207" width="5.80" height="2" fill="#c04c3d"/><rect x="477.70" y="209" width="5.80" height="2" fill="#e5761f"/><rect x="478.09" y="211" width="5.80" height="2" fill="#d2602f"/><rect x="477.82" y="213" width="5.80" height="2" fill="#cb5934"/><rect x="477.70" y="215" width="5.80" height="2" fill="#b64146"/><rect x="477.72" y="217" width="5.80" height="2" fill="#cc5934"/><rect x="478.08" y="219" width="5.80" height="2" fill="#f7930a"/><rect x="478.32" y="221" width="5.80" height="2" fill="#f28b10"/><rect x="478.03" y="223" width="5.80" height="2" fill="#ffb200"/><rect x="478.34" y="225" width="5.80" height="2" fill="#fe9f01"/><rect x="478.30" y="227" width="5.80" height="2" fill="#ffae00"/><rect x="478.32" y="229" width="5.80" height="2" fill="#ffa100"/><rect x="477.95" y="231" width="5.80" height="2" fill="#ffaa00"/><rect x="478.10" y="233" width="5.80" height="2" fill="#fa9806"/><rect x="478.14" y="235" width="5.80" height="2" fill="#fc9b04"/><rect x="478.24" y="237" width="5.80" height="2" fill="#ffb000"/><rect x="478.10" y="239" width="5.80" height="2" fill="#f6920a"/><rect x="478.31" y="241" width="5.80" height="2" fill="#e5761f"/><rect x="478.15" y="243" width="5.80" height="2" fill="#bd4840"/><rect x="478.34" y="245" width="5.80" height="2" fill="#c04c3e"/><rect x="478.45" y="247" width="5.80" height="2" fill="#a12957"/><rect x="478.30" y="249" width="5.80" height="2" fill="#a52d54"/><rect x="478.48" y="251" width="5.80" height="2" fill="#c65338"/><rect x="478.59" y="253" width="5.80" height="2" fill="#ab334f"/><rect x="478.67" y="255" width="5.80" height="2" fill="#c04b3e"/><rect x="478.75" y="257" width="5.80" height="2" fill="#ca5835"/><rect x="478.92" y="259" width="5.80" height="2" fill="#770078"/><rect x="478.50" y="261" width="5.80" height="2" fill="#0e0071"/><rect x="479.43" y="263" width="4.00" height="2" fill="#180073"/><rect x="479.43" y="265" width="4.00" height="2" fill="#00006e"/><rect x="479.41" y="267" width="4.00" height="2" fill="#000056"/><rect x="479.61" y="269" width="4.00" height="2" fill="#01013d"/><rect x="479.77" y="271" width="4.00" height="2" fill="#010152"/><rect x="479.43" y="273" width="4.00" height="2" fill="#01013b"/><rect x="479.70" y="275" width="4.00" height="2" fill="#000058"/><rect x="479.27" y="277" width="4.00" height="2" fill="#010154"/><rect x="479.45" y="279" width="4.00" height="2" fill="#01013b"/><rect x="479.48" y="281" width="4.00" height="2" fill="#01013d"/><rect x="479.43" y="283" width="4.00" height="2" fill="#00005b"/><rect x="479.39" y="285" width="4.00" height="2" fill="#010149"/><rect x="479.53" y="287" width="4.00" height="2" fill="#01014e"/><rect x="479.24" y="289" width="4.00" height="2" fill="#01013d"/><rect x="479.70" y="291" width="4.00" height="2" fill="#00005a"/><rect x="479.32" y="293" width="4.00" height="2" fill="#01014e"/><rect x="479.57" y="295" width="4.00" height="2" fill="#010149"/><rect x="479.76" y="297" width="4.00" height="2" fill="#000064"/><rect x="479.54" y="299" width="4.00" height="2" fill="#01006e"/><rect x="479.75" y="301" width="4.00" height="2" fill="#02006e"/><rect x="479.30" y="303" width="4.00" height="2" fill="#110072"/><rect x="479.28" y="305" width="4.00" height="2" fill="#000068"/><rect x="479.71" y="307" width="4.00" height="2" fill="#000061"/><rect x="479.50" y="309" width="4.00" height="2" fill="#150072"/><rect x="479.60" y="311" width="4.00" height="2" fill="#0d0071"/><rect x="479.44" y="313" width="4.00" height="2" fill="#090070"/><rect x="479.38" y="315" width="4.00" height="2" fill="#110072"/><rect x="479.23" y="317" width="4.00" height="2" fill="#010154"/><rect x="479.67" y="319" width="4.00" height="2" fill="#000066"/><rect x="479.34" y="321" width="4.00" height="2" fill="#00005d"/><rect x="479.58" y="327" width="4.00" height="2" fill="#010128"/><rect x="479.59" y="335" width="4.00" height="2" fill="#01012c"/><rect x="479.26" y="337" width="4.00" height="2" fill="#020212"/><rect x="479.60" y="341" width="4.00" height="2" fill="#020211"/><rect x="479.23" y="343" width="4.00" height="2" fill="#020212"/><rect x="479.57" y="345" width="4.00" height="2" fill="#020211"/><rect x="479.25" y="347" width="4.00" height="2" fill="#020207"/><rect x="479.61" y="357" width="4.00" height="2" fill="#020210"/><rect x="479.20" y="359" width="4.00" height="2" fill="#02020d"/><rect x="479.22" y="363" width="4.00" height="2" fill="#020208"/><rect x="479.39" y="365" width="4.00" height="2" fill="#020207"/><rect x="479.21" y="375" width="4.00" height="2" fill="#020211"/><rect x="479.66" y="377" width="4.00" height="2" fill="#02020b"/><rect x="479.65" y="379" width="4.00" height="2" fill="#020207"/><rect x="479.57" y="381" width="4.00" height="2" fill="#020207"/><rect x="479.71" y="383" width="4.00" height="2" fill="#020207"/><rect x="479.55" y="385" width="4.00" height="2" fill="#020207"/><rect x="479.76" y="387" width="4.00" height="2" fill="#020206"/><rect x="479.76" y="389" width="4.00" height="2" fill="#020207"/><rect x="479.25" y="391" width="4.00" height="2" fill="#020213"/></g>
<g filter="url(#b1)"><rect x="477.12" y="29" width="2.00" height="2" fill="#16169e"/><rect x="477.22" y="33" width="2.00" height="2" fill="#1616a0"/><rect x="476.93" y="37" width="2.00" height="2" fill="#3116a6"/><rect x="477.26" y="41" width="2.00" height="2" fill="#2016a2"/><rect x="476.90" y="43" width="2.00" height="2" fill="#2316a3"/><rect x="476.94" y="45" width="2.00" height="2" fill="#3c16a8"/><rect x="477.40" y="47" width="2.00" height="2" fill="#3716a7"/><rect x="477.17" y="49" width="2.00" height="2" fill="#2716a4"/><rect x="477.40" y="51" width="2.00" height="2" fill="#2616a3"/><rect x="477.46" y="53" width="2.00" height="2" fill="#3f16a8"/><rect x="477.36" y="55" width="2.00" height="2" fill="#2f16a5"/><rect x="477.50" y="57" width="2.00" height="2" fill="#2d16a5"/><rect x="477.25" y="59" width="2.00" height="2" fill="#2816a4"/><rect x="477.29" y="61" width="2.00" height="2" fill="#3616a7"/><rect x="477.60" y="63" width="2.00" height="2" fill="#4016a9"/><rect x="477.21" y="65" width="2.00" height="2" fill="#2616a3"/><rect x="477.31" y="67" width="2.00" height="2" fill="#3416a6"/><rect x="477.62" y="69" width="2.00" height="2" fill="#3116a6"/><rect x="477.53" y="71" width="2.00" height="2" fill="#3b16a8"/><rect x="477.81" y="73" width="2.00" height="2" fill="#3316a6"/><rect x="477.56" y="75" width="2.00" height="2" fill="#2616a3"/><rect x="477.60" y="77" width="2.00" height="2" fill="#3c16a8"/><rect x="477.47" y="79" width="2.00" height="2" fill="#4016a9"/><rect x="477.67" y="81" width="2.00" height="2" fill="#2516a3"/><rect x="477.70" y="83" width="2.00" height="2" fill="#3116a6"/><rect x="477.78" y="85" width="2.00" height="2" fill="#2916a4"/><rect x="478.11" y="87" width="2.00" height="2" fill="#3f16a9"/><rect x="477.73" y="89" width="2.00" height="2" fill="#3716a7"/><rect x="477.70" y="91" width="2.00" height="2" fill="#3616a7"/><rect x="478.12" y="93" width="2.00" height="2" fill="#2516a3"/><rect x="477.77" y="95" width="2.00" height="2" fill="#2c16a5"/><rect x="477.78" y="97" width="2.00" height="2" fill="#4316a9"/><rect x="477.82" y="99" width="2.00" height="2" fill="#3516a6"/><rect x="478.17" y="101" width="2.00" height="2" fill="#5816aa"/><rect x="477.84" y="103" width="2.00" height="2" fill="#3d16a8"/><rect x="477.91" y="105" width="2.00" height="2" fill="#550078"/><rect x="478.27" y="107" width="2.00" height="2" fill="#530078"/><rect x="478.18" y="109" width="2.00" height="2" fill="#550078"/><rect x="478.09" y="111" width="2.00" height="2" fill="#510078"/><rect x="478.04" y="113" width="2.00" height="2" fill="#630078"/><rect x="478.14" y="115" width="2.00" height="2" fill="#5d0078"/><rect x="478.55" y="117" width="2.00" height="2" fill="#5a0078"/><rect x="478.44" y="119" width="2.00" height="2" fill="#6b0078"/><rect x="478.08" y="121" width="2.01" height="2" fill="#740078"/><rect x="478.63" y="123" width="2.02" height="2" fill="#7e0673"/><rect x="478.44" y="125" width="2.03" height="2" fill="#800872"/><rect x="478.72" y="127" width="2.04" height="2" fill="#88106b"/><rect x="478.28" y="129" width="2.05" height="2" fill="#6d0078"/><rect x="478.22" y="131" width="2.07" height="2" fill="#750078"/><rect x="478.28" y="133" width="2.08" height="2" fill="#730078"/><rect x="478.49" y="135" width="2.09" height="2" fill="#690078"/><rect x="478.57" y="137" width="2.10" height="2" fill="#6d0078"/><rect x="478.73" y="139" width="2.12" height="2" fill="#9b235c"/><rect x="478.77" y="141" width="2.13" height="2" fill="#790177"/><rect x="478.84" y="143" width="2.14" height="2" fill="#850d6e"/><rect x="478.71" y="145" width="2.15" height="2" fill="#a02858"/><rect x="479.00" y="147" width="2.16" height="2" fill="#9c245b"/><rect x="478.97" y="149" width="2.18" height="2" fill="#961e60"/><rect x="478.51" y="151" width="2.19" height="2" fill="#9b235c"/><rect x="478.51" y="153" width="2.20" height="2" fill="#a12957"/><rect x="478.62" y="155" width="2.21" height="2" fill="#cb5934"/><rect x="478.70" y="157" width="2.22" height="2" fill="#c24d3c"/><rect x="479.03" y="159" width="2.24" height="2" fill="#bb4542"/><rect x="478.75" y="161" width="2.25" height="2" fill="#cd5b33"/><rect x="478.70" y="163" width="2.26" height="2" fill="#e07023"/><rect x="479.05" y="165" width="2.27" height="2" fill="#ba4543"/><rect x="479.12" y="167" width="2.28" height="2" fill="#ea7e19"/><rect x="479.25" y="169" width="2.30" height="2" fill="#e77a1d"/><rect x="479.05" y="171" width="2.31" height="2" fill="#ee8514"/><rect x="479.09" y="173" width="2.32" height="2" fill="#cf5d31"/><rect x="479.19" y="175" width="2.33" height="2" fill="#e27322"/><rect x="478.83" y="177" width="2.35" height="2" fill="#e07123"/><rect x="478.90" y="179" width="2.36" height="2" fill="#d96929"/><rect x="479.25" y="181" width="2.37" height="2" fill="#ef8713"/><rect x="479.06" y="183" width="2.38" height="2" fill="#ec8117"/><rect x="479.16" y="185" width="2.39" height="2" fill="#f28b10"/><rect x="478.14" y="187" width="4.20" height="2" fill="#ffa800"/><rect x="478.32" y="189" width="4.20" height="2" fill="#ffbd00"/><rect x="478.21" y="191" width="4.20" height="2" fill="#ffac00"/><rect x="478.40" y="193" width="4.20" height="2" fill="#ffae00"/><rect x="478.59" y="195" width="4.20" height="2" fill="#ffaf00"/><rect x="478.55" y="197" width="4.20" height="2" fill="#ffae00"/><rect x="478.29" y="199" width="4.20" height="2" fill="#df7024"/><rect x="478.28" y="201" width="4.20" height="2" fill="#fb9a05"/><rect x="478.77" y="203" width="4.20" height="2" fill="#ffa600"/><rect x="478.47" y="205" width="4.20" height="2" fill="#ffa200"/><rect x="478.90" y="207" width="4.20" height="2" fill="#ffad00"/><rect x="478.50" y="209" width="4.20" height="2" fill="#ffc300"/><rect x="478.89" y="211" width="4.20" height="2" fill="#ffb800"/><rect x="478.62" y="213" width="4.20" height="2" fill="#ffb400"/><rect x="478.50" y="215" width="4.20" height="2" fill="#ffa800"/><rect x="478.52" y="217" width="4.20" height="2" fill="#ffb400"/><rect x="478.88" y="219" width="4.20" height="2" fill="#ffdd00"/><rect x="479.12" y="221" width="4.20" height="2" fill="#ffd500"/><rect x="478.83" y="223" width="4.20" height="2" fill="#fff179"/><rect x="479.14" y="225" width="4.20" height="2" fill="#ffe622"/><rect x="479.10" y="227" width="4.20" height="2" fill="#ffef68"/><rect x="479.12" y="229" width="4.20" height="2" fill="#ffe629"/><rect x="478.75" y="231" width="4.20" height="2" fill="#ffec56"/><rect x="478.90" y="233" width="4.20" height="2" fill="#ffe102"/><rect x="478.94" y="235" width="4.20" height="2" fill="#ffe311"/><rect x="479.04" y="237" width="4.20" height="2" fill="#fff073"/><rect x="478.90" y="239" width="4.20" height="2" fill="#ffdc00"/><rect x="479.11" y="241" width="4.20" height="2" fill="#ffc300"/><rect x="478.95" y="243" width="4.20" height="2" fill="#ffab00"/><rect x="479.14" y="245" width="4.20" height="2" fill="#ffad00"/><rect x="479.25" y="247" width="4.20" height="2" fill="#fb9905"/><rect x="479.10" y="249" width="4.20" height="2" fill="#fd9d03"/><rect x="479.28" y="251" width="4.20" height="2" fill="#ffb100"/><rect x="479.39" y="253" width="4.20" height="2" fill="#ffa100"/><rect x="479.47" y="255" width="4.20" height="2" fill="#ffad00"/><rect x="479.55" y="257" width="4.20" height="2" fill="#ffb300"/><rect x="479.72" y="259" width="4.20" height="2" fill="#e5771f"/><rect x="479.30" y="261" width="4.20" height="2" fill="#6a0078"/><rect x="480.43" y="263" width="2.00" height="2" fill="#7c0474"/><rect x="480.43" y="265" width="2.00" height="2" fill="#500078"/><rect x="480.41" y="267" width="2.00" height="2" fill="#390a91"/><rect x="480.61" y="269" width="2.00" height="2" fill="#270a8d"/><rect x="480.77" y="271" width="2.00" height="2" fill="#370a90"/><rect x="480.43" y="273" width="2.00" height="2" fill="#260a8d"/><rect x="480.70" y="275" width="2.00" height="2" fill="#3c0a91"/><rect x="480.27" y="277" width="2.00" height="2" fill="#380a91"/><rect x="480.45" y="279" width="2.00" height="2" fill="#260a8d"/><rect x="480.48" y="281" width="2.00" height="2" fill="#280a8d"/><rect x="480.43" y="283" width="2.00" height="2" fill="#400a91"/><rect x="480.39" y="285" width="2.00" height="2" fill="#300a8f"/><rect x="480.53" y="287" width="2.00" height="2" fill="#340a90"/><rect x="480.24" y="289" width="2.00" height="2" fill="#270a8d"/><rect x="480.70" y="291" width="2.00" height="2" fill="#3f0a91"/><rect x="480.32" y="293" width="2.00" height="2" fill="#340a90"/><rect x="480.57" y="295" width="2.00" height="2" fill="#300a8f"/><rect x="480.76" y="297" width="2.00" height="2" fill="#4d0a91"/><rect x="480.54" y="299" width="2.00" height="2" fill="#510078"/><rect x="480.75" y="301" width="2.00" height="2" fill="#540078"/><rect x="480.30" y="303" width="2.00" height="2" fill="#700078"/><rect x="480.28" y="305" width="2.00" height="2" fill="#510a91"/><rect x="480.71" y="307" width="2.00" height="2" fill="#490a91"/><rect x="480.50" y="309" width="2.00" height="2" fill="#770078"/><rect x="480.60" y="311" width="2.00" height="2" fill="#680078"/><rect x="480.44" y="313" width="2.00" height="2" fill="#600078"/><rect x="480.38" y="315" width="2.00" height="2" fill="#700078"/><rect x="480.23" y="317" width="2.00" height="2" fill="#380a91"/><rect x="480.67" y="319" width="2.00" height="2" fill="#4f0a91"/><rect x="480.34" y="321" width="2.00" height="2" fill="#430a91"/><rect x="480.58" y="327" width="2.00" height="2" fill="#180a8a"/><rect x="480.59" y="335" width="2.00" height="2" fill="#110071"/><rect x="480.26" y="337" width="2.00" height="2" fill="#00006b"/><rect x="480.60" y="341" width="2.00" height="2" fill="#00006a"/><rect x="480.23" y="343" width="2.00" height="2" fill="#00006b"/><rect x="480.57" y="345" width="2.00" height="2" fill="#00006a"/><rect x="480.25" y="347" width="2.00" height="2" fill="#000056"/><rect x="480.61" y="357" width="2.00" height="2" fill="#000069"/><rect x="480.20" y="359" width="2.00" height="2" fill="#000066"/><rect x="480.22" y="363" width="2.00" height="2" fill="#000061"/><rect x="480.39" y="365" width="2.00" height="2" fill="#000056"/><rect x="480.21" y="375" width="2.00" height="2" fill="#00006a"/><rect x="480.66" y="377" width="2.00" height="2" fill="#000064"/><rect x="480.65" y="379" width="2.00" height="2" fill="#01014e"/><rect x="480.57" y="381" width="2.00" height="2" fill="#01014f"/><rect x="480.71" y="383" width="2.00" height="2" fill="#010150"/><rect x="480.55" y="385" width="2.00" height="2" fill="#01014a"/><rect x="480.76" y="387" width="2.00" height="2" fill="#010146"/><rect x="480.76" y="389" width="2.00" height="2" fill="#010154"/><rect x="480.25" y="391" width="2.00" height="2" fill="#00006c"/></g>
<g filter="url(#b1)"><rect x="479.19" y="187" width="2.10" height="2" fill="#ffd300"/><rect x="479.37" y="189" width="2.10" height="2" fill="#ffe51e"/><rect x="479.26" y="191" width="2.10" height="2" fill="#ffd700"/><rect x="479.45" y="193" width="2.10" height="2" fill="#ffd800"/><rect x="479.64" y="195" width="2.10" height="2" fill="#ffda00"/><rect x="479.60" y="197" width="2.10" height="2" fill="#ffd900"/><rect x="479.34" y="199" width="2.10" height="2" fill="#ffa100"/><rect x="479.33" y="201" width="2.10" height="2" fill="#ffc500"/><rect x="479.82" y="203" width="2.10" height="2" fill="#ffd100"/><rect x="479.52" y="205" width="2.10" height="2" fill="#ffcc00"/><rect x="479.95" y="207" width="2.10" height="2" fill="#ffd800"/><rect x="479.55" y="209" width="2.10" height="2" fill="#ffe93a"/><rect x="479.94" y="211" width="2.10" height="2" fill="#ffe206"/><rect x="479.67" y="213" width="2.10" height="2" fill="#ffdf00"/><rect x="479.55" y="215" width="2.10" height="2" fill="#ffd200"/><rect x="479.57" y="217" width="2.10" height="2" fill="#ffdf00"/><rect x="479.93" y="219" width="2.10" height="2" fill="#fff9c0"/><rect x="480.17" y="221" width="2.10" height="2" fill="#fff490"/><rect x="479.88" y="223" width="2.10" height="2" fill="#ffffff"/><rect x="480.19" y="225" width="2.10" height="2" fill="#ffffff"/><rect x="480.15" y="227" width="2.10" height="2" fill="#ffffff"/><rect x="480.17" y="229" width="2.10" height="2" fill="#ffffff"/><rect x="479.80" y="231" width="2.10" height="2" fill="#ffffff"/><rect x="479.95" y="233" width="2.10" height="2" fill="#fffcdc"/><rect x="479.99" y="235" width="2.10" height="2" fill="#fffef0"/><rect x="480.09" y="237" width="2.10" height="2" fill="#ffffff"/><rect x="479.95" y="239" width="2.10" height="2" fill="#fff8ba"/><rect x="480.16" y="241" width="2.10" height="2" fill="#ffe939"/><rect x="480.00" y="243" width="2.10" height="2" fill="#ffd600"/><rect x="480.19" y="245" width="2.10" height="2" fill="#ffd800"/><rect x="480.30" y="247" width="2.10" height="2" fill="#ffc400"/><rect x="480.15" y="249" width="2.10" height="2" fill="#ffc800"/><rect x="480.33" y="251" width="2.10" height="2" fill="#ffdc00"/><rect x="480.44" y="253" width="2.10" height="2" fill="#ffcc00"/><rect x="480.52" y="255" width="2.10" height="2" fill="#ffd800"/><rect x="480.60" y="257" width="2.10" height="2" fill="#ffde00"/><rect x="480.77" y="259" width="2.10" height="2" fill="#ffa400"/><rect x="480.35" y="261" width="2.10" height="2" fill="#a52d54"/></g>
</g>
<rect x="3" y="3" width="311" height="45" fill="#fff" shape-rendering="crispEdges"/>
<text class="mono" x="4.3" y="15" xml:space="preserve">Screen Capture Time: 2025-11-06 23:32:55 UTC</text>
<text class="mono" x="4.3" y="29">143048017 Hz</text>
<text class="mono" x="4.3" y="43">Config = V8</text>
<g shape-rendering="crispEdges">
<rect x="5" y="53" width="99" height="15" fill="url(#pal)"/>
<rect x="5" y="68" width="99" height="1" fill="#000"/>
<rect x="5" y="69" width="99" height="23" fill="#fff"/>
<rect x="8" y="69" width="1" height="4" fill="#000"/>
<rect x="12" y="69" width="1" height="4" fill="#000"/>
<rect x="17" y="69" width="1" height="4" fill="#000"/>
<rect x="21" y="69" width="1" height="4" fill="#000"/>
<rect x="26" y="69" width="1" height="7" fill="#000"/>
<rect x="30" y="69" width="1" height="4" fill="#000"/>
<rect x="35" y="69" width="1" height="4" fill="#000"/>
<rect x="39" y="69" width="1" height="4" fill="#000"/>
<rect x="44" y="69" width="1" height="4" fill="#000"/>
<rect x="48" y="69" width="1" height="10" fill="#000"/>
<rect x="52" y="69" width="1" height="4" fill="#000"/>
<rect x="57" y="69" width="1" height="4" fill="#000"/>
<rect x="61" y="69" width="1" height="4" fill="#000"/>
<rect x="66" y="69" width="1" height="4" fill="#000"/>
<rect x="70" y="69" width="1" height="7" fill="#000"/>
<rect x="75" y="69" width="1" height="4" fill="#000"/>
<rect x="79" y="69" width="1" height="4" fill="#000"/>
<rect x="84" y="69" width="1" height="4" fill="#000"/>
<rect x="88" y="69" width="1" height="4" fill="#000"/>
<rect x="93" y="69" width="1" height="10" fill="#000"/>
<rect x="97" y="69" width="1" height="4" fill="#000"/>
<rect x="102" y="69" width="1" height="4" fill="#000"/>
</g>
<clipPath id="cbc"><rect x="5" y="69" width="99" height="23"/></clipPath>
<g clip-path="url(#cbc)" class="sans" fill="#000">
<text x="4.6" y="90" xml:space="preserve">-80 dB</text>
<text x="48.4" y="90" text-anchor="middle">-60</text>
<text x="92.3" y="90" text-anchor="middle">-40</text>
</g>
<g clip-path="url(#spc)">
<rect x="5" y="760" width="1" height="20" fill="#fff" shape-rendering="crispEdges"/>
<text class="sans" fill="#fff" transform="translate(2.4,778.5) rotate(-90)" textLength="100" lengthAdjust="spacing">2025-11-06 23:31:40</text>
<rect x="120" y="760" width="1" height="20" fill="#fff" shape-rendering="crispEdges"/>
<text class="sans" fill="#fff" transform="translate(117.4,778.5) rotate(-90)" textLength="100" lengthAdjust="spacing">2025-11-06 23:31:50</text>
<rect x="234" y="760" width="1" height="20" fill="#fff" shape-rendering="crispEdges"/>
<text class="sans" fill="#fff" transform="translate(231.4,778.5) rotate(-90)" textLength="100" lengthAdjust="spacing">2025-11-06 23:32:00</text>
<rect x="339" y="760" width="1" height="20" fill="#fff" shape-rendering="crispEdges"/>
<text class="sans" fill="#fff" transform="translate(336.4,778.5) rotate(-90)" textLength="100" lengthAdjust="spacing">2025-11-06 23:32:10</text>
<rect x="454" y="760" width="1" height="20" fill="#fff" shape-rendering="crispEdges"/>
<text class="sans" fill="#fff" transform="translate(451.4,778.5) rotate(-90)" textLength="100" lengthAdjust="spacing">2025-11-06 23:32:20</text>
<rect x="568" y="760" width="1" height="20" fill="#fff" shape-rendering="crispEdges"/>
<text class="sans" fill="#fff" transform="translate(565.4,778.5) rotate(-90)" textLength="100" lengthAdjust="spacing">2025-11-06 23:32:30</text>
<rect x="682" y="760" width="1" height="20" fill="#fff" shape-rendering="crispEdges"/>
<text class="sans" fill="#fff" transform="translate(679.4,778.5) rotate(-90)" textLength="100" lengthAdjust="spacing">2025-11-06 23:32:40</text>
<rect x="787" y="760" width="1" height="20" fill="#fff" shape-rendering="crispEdges"/>
<text class="sans" fill="#fff" transform="translate(784.4,778.5) rotate(-90)" textLength="100" lengthAdjust="spacing">2025-11-06 23:32:50</text>
</g>
<g shape-rendering="crispEdges">
<rect x="818" y="3" width="8" height="1" fill="#000"/>
<rect x="818" y="11" width="8" height="1" fill="#000"/>
<rect x="818" y="19" width="11" height="1" fill="#000"/>
<rect x="818" y="26" width="8" height="1" fill="#000"/>
<rect x="818" y="34" width="8" height="1" fill="#000"/>
<rect x="818" y="42" width="8" height="1" fill="#000"/>
<rect x="818" y="50" width="8" height="1" fill="#000"/>
<rect x="818" y="58" width="8" height="1" fill="#000"/>
<rect x="818" y="65" width="8" height="1" fill="#000"/>
<rect x="818" y="73" width="8" height="1" fill="#000"/>
<rect x="818" y="81" width="8" height="1" fill="#000"/>
<rect x="818" y="89" width="8" height="1" fill="#000"/>
<rect x="818" y="97" width="26" height="1" fill="#000"/>
<rect x="818" y="104" width="8" height="1" fill="#000"/>
<rect x="818" y="112" width="8" height="1" fill="#000"/>
<rect x="818" y="120" width="8" height="1" fill="#000"/>
<rect x="818" y="128" width="8" height="1" fill="#000"/>
<rect x="818" y="136" width="8" height="1" fill="#000"/>
<rect x="818" y="143" width="8" height="1" fill="#000"/>
<rect x="818" y="151" width="8" height="1" fill="#000"/>
<rect x="818" y="159" width="8" height="1" fill="#000"/>
<rect x="818" y="167" width="8" height="1" fill="#000"/>
<rect x="818" y="175" width="11" height="1" fill="#000"/>
<rect x="818" y="182" width="8" height="1" fill="#000"/>
<rect x="818" y="190" width="8" height="1" fill="#000"/>
<rect x="818" y="198" width="8" height="1" fill="#000"/>
<rect x="818" y="206" width="8" height="1" fill="#000"/>
<rect x="818" y="214" width="8" height="1" fill="#000"/>
<rect x="818" y="221" width="8" height="1" fill="#000"/>
<rect x="818" y="229" width="8" height="1" fill="#000"/>
<rect x="818" y="237" width="8" height="1" fill="#000"/>
<rect x="818" y="245" width="8" height="1" fill="#000"/>
<rect x="818" y="253" width="26" height="1" fill="#000"/>
<rect x="818" y="260" width="8" height="1" fill="#000"/>
<rect x="818" y="268" width="8" height="1" fill="#000"/>
<rect x="818" y="276" width="8" height="1" fill="#000"/>
<rect x="818" y="284" width="8" height="1" fill="#000"/>
<rect x="818" y="292" width="8" height="1" fill="#000"/>
<rect x="818" y="299" width="8" height="1" fill="#000"/>
<rect x="818" y="307" width="8" height="1" fill="#000"/>
<rect x="818" y="315" width="8" height="1" fill="#000"/>
<rect x="818" y="323" width="8" height="1" fill="#000"/>
<rect x="818" y="331" width="11" height="1" fill="#000"/>
<rect x="818" y="338" width="8" height="1" fill="#000"/>
<rect x="818" y="346" width="8" height="1" fill="#000"/>
<rect x="818" y="354" width="8" height="1" fill="#000"/>
<rect x="818" y="362" width="8" height="1" fill="#000"/>
<rect x="818" y="370" width="8" height="1" fill="#000"/>
<rect x="818" y="377" width="8" height="1" fill="#000"/>
<rect x="818" y="385" width="8" height="1" fill="#000"/>
<rect x="818" y="393" width="8" height="1" fill="#000"/>
<rect x="818" y="401" width="8" height="1" fill="#000"/>
<rect x="818" y="409" width="26" height="1" fill="#000"/>
<rect x="818" y="416" width="8" height="1" fill="#000"/>
<rect x="818" y="424" width="8" height="1" fill="#000"/>
<rect x="818" y="432" width="8" height="1" fill="#000"/>
<rect x="818" y="440" width="8" height="1" fill="#000"/>
<rect x="818" y="448" width="8" height="1" fill="#000"/>
<rect x="818" y="455" width="8" height="1" fill="#000"/>
<rect x="818" y="463" width="8" height="1" fill="#000"/>
<rect x="818" y="471" width="8" height="1" fill="#000"/>
<rect x="818" y="479" width="8" height="1" fill="#000"/>
<rect x="818" y="487" width="11" height="1" fill="#000"/>
<rect x="818" y="494" width="8" height="1" fill="#000"/>
<rect x="818" y="502" width="8" height="1" fill="#000"/>
<rect x="818" y="510" width="8" height="1" fill="#000"/>
<rect x="818" y="518" width="8" height="1" fill="#000"/>
<rect x="818" y="526" width="8" height="1" fill="#000"/>
<rect x="818" y="533" width="8" height="1" fill="#000"/>
<rect x="818" y="541" width="8" height="1" fill="#000"/>
<rect x="818" y="549" width="8" height="1" fill="#000"/>
<rect x="818" y="557" width="8" height="1" fill="#000"/>
<rect x="818" y="565" width="26" height="1" fill="#000"/>
<rect x="818" y="572" width="8" height="1" fill="#000"/>
<rect x="818" y="580" width="8" height="1" fill="#000"/>
<rect x="818" y="588" width="8" height="1" fill="#000"/>
<rect x="818" y="596" width="8" height="1" fill="#000"/>
<rect x="818" y="604" width="8" height="1" fill="#000"/>
<rect x="818" y="611" width="8" height="1" fill="#000"/>
<rect x="818" y="619" width="8" height="1" fill="#000"/>
<rect x="818" y="627" width="8" height="1" fill="#000"/>
<rect x="818" y="635" width="8" height="1" fill="#000"/>
<rect x="818" y="643" width="11" height="1" fill="#000"/>
<rect x="818" y="650" width="8" height="1" fill="#000"/>
<rect x="818" y="658" width="8" height="1" fill="#000"/>
<rect x="818" y="666" width="8" height="1" fill="#000"/>
<rect x="818" y="674" width="8" height="1" fill="#000"/>
<rect x="818" y="682" width="8" height="1" fill="#000"/>
<rect x="818" y="689" width="8" height="1" fill="#000"/>
<rect x="818" y="697" width="8" height="1" fill="#000"/>
<rect x="818" y="705" width="8" height="1" fill="#000"/>
<rect x="818" y="713" width="8" height="1" fill="#000"/>
<rect x="818" y="721" width="26" height="1" fill="#000"/>
<rect x="818" y="728" width="8" height="1" fill="#000"/>
<rect x="818" y="736" width="8" height="1" fill="#000"/>
<rect x="818" y="744" width="8" height="1" fill="#000"/>
<rect x="818" y="752" width="8" height="1" fill="#000"/>
<rect x="818" y="760" width="8" height="1" fill="#000"/>
<rect x="818" y="767" width="8" height="1" fill="#000"/>
<rect x="818" y="775" width="8" height="1" fill="#000"/>
<rect x="839" y="14" width="1" height="760" fill="#00008b"/>
</g>
<path d="M823.5 9.5 L839.5 17.5 M839.5 773.5 L825 782" stroke="#00008b" stroke-width="1" fill="none"/>
<text class="mono" style="fill:#484444" text-anchor="middle" transform="translate(849.3,97.5) rotate(90)" xml:space="preserve">143050400</text>
<text class="mono" style="fill:#484444" text-anchor="middle" transform="translate(849.3,253.5) rotate(90)" xml:space="preserve">143050200</text>
<text class="mono" style="fill:#484444" text-anchor="middle" transform="translate(849.3,409.5) rotate(90)" xml:space="preserve">143050000</text>
<text class="mono" style="fill:#484444" text-anchor="middle" transform="translate(849.3,565.5) rotate(90)" xml:space="preserve">143049800</text>
<text class="mono" style="fill:#484444" text-anchor="middle" transform="translate(849.3,721.5) rotate(90)" xml:space="preserve">143049600 Hz</text>
<g shape-rendering="crispEdges">
<rect x="860" y="1" width="80" height="781" fill="#545454"/>
<rect x="860" y="1" width="80" height="12" fill="#000"/>
<rect x="860" y="778" width="80" height="4" fill="#000"/>
<path d="M860 13.5h1M860 14.5h1M860 15.5h1M860 16.5h2M860 17.5h2M860 18.5h2M860 19.5h2M860 20.5h5M860 21.5h3M860 22.5h3M860 23.5h4M860 24.5h7M860 25.5h11M860 28.5h17M860 29.5h7M860 30.5h8M860 31.5h16M860 32.5h10M860 33.5h10M860 34.5h9M860 35.5h9M860 36.5h8M860 37.5h7M860 38.5h9M860 39.5h11M860 40.5h16M860 41.5h20M860 42.5h22M860 43.5h15M860 44.5h14M860 45.5h2M860 46.5h3M860 47.5h9M860 48.5h16M860 49.5h4M860 50.5h12M860 51.5h8M860 52.5h1M860 53.5h1M860 54.5h3M860 55.5h5M860 56.5h13M860 57.5h15M860 58.5h10M860 59.5h10M860 60.5h9M860 61.5h9M860 62.5h8M860 63.5h8M860 64.5h9M860 65.5h12M860 66.5h10M860 67.5h8M860 68.5h3M860 69.5h11M860 70.5h16M860 71.5h12M860 72.5h4M860 73.5h19M860 74.5h14M860 75.5h15M860 76.5h16M860 77.5h16M860 78.5h18M860 79.5h16M860 80.5h16M860 81.5h17M860 82.5h20M860 83.5h14M860 84.5h18M860 85.5h7M860 86.5h3M860 87.5h1M860 88.5h8M860 89.5h12M860 90.5h15M860 91.5h14M860 92.5h12M860 93.5h11M860 94.5h19M860 97.5h19M860 98.5h11M860 99.5h13M860 100.5h10M860 101.5h13M860 102.5h12M860 103.5h13M860 104.5h15M860 105.5h13M860 106.5h13M860 107.5h18M860 108.5h17M860 109.5h12M860 110.5h1M860 111.5h7M860 112.5h12M860 113.5h4M860 114.5h11M860 115.5h10M860 116.5h10M860 117.5h9M860 118.5h11M860 119.5h14M860 123.5h18M860 124.5h13M860 125.5h8M860 126.5h3M860 127.5h6M860 128.5h3M860 129.5h12M860 130.5h11M860 131.5h11M860 132.5h18M860 133.5h12M860 134.5h16M860 135.5h3M860 136.5h11M860 137.5h16M860 138.5h13M860 139.5h11M860 140.5h8M860 141.5h12M860 142.5h10M860 143.5h14M860 144.5h11M860 145.5h15M860 146.5h4M860 147.5h3M860 148.5h5M860 149.5h7M860 150.5h7M860 151.5h8M860 152.5h7M860 153.5h8M860 154.5h5M860 155.5h10M860 156.5h4M860 157.5h17M860 158.5h15M860 159.5h17M860 160.5h10M860 161.5h9M860 162.5h1M860 163.5h5M860 167.5h16M860 168.5h17M860 169.5h13M860 170.5h14M860 174.5h18M860 175.5h19M860 176.5h18M860 177.5h10M860 178.5h9M860 179.5h11M860 180.5h10M860 181.5h15M860 182.5h14M860 183.5h5M860 184.5h5M860 188.5h17M860 189.5h13M860 190.5h20M860 191.5h16M860 192.5h5M860 193.5h21M860 194.5h24M860 195.5h21M860 196.5h17M860 197.5h16M860 198.5h14M860 199.5h12M860 200.5h13M860 201.5h15M860 202.5h5M860 203.5h16M860 209.5h5M860 210.5h6M860 211.5h11M860 212.5h21M860 213.5h19M860 214.5h17M860 215.5h23M860 216.5h16M860 217.5h19M860 218.5h18M860 219.5h19M860 220.5h4M860 221.5h10M860 222.5h5M860 223.5h8M860 224.5h12M860 225.5h16M860 226.5h5M860 227.5h17M860 228.5h17M860 229.5h20M860 230.5h22M860 231.5h23M860 232.5h18M860 233.5h18M860 234.5h7M860 235.5h12M860 236.5h12M860 237.5h5M860 238.5h16M860 239.5h16M860 240.5h16M860 241.5h17M860 242.5h17M860 243.5h5M860 244.5h16M860 245.5h18M860 246.5h18M860 247.5h12M860 248.5h11M860 249.5h15M860 250.5h3M860 251.5h13M860 252.5h18M860 253.5h18M860 254.5h17M860 255.5h15M860 256.5h14M860 257.5h13M860 258.5h17M860 259.5h14M860 260.5h15M860 261.5h16M860 262.5h17M860 263.5h21M860 264.5h11M860 265.5h9M860 266.5h8M860 267.5h8M860 268.5h9M860 269.5h17M860 270.5h12M860 271.5h13M860 272.5h4M860 273.5h14M860 274.5h14M860 275.5h3M860 276.5h6M860 277.5h18M860 280.5h12M860 281.5h12M860 282.5h16M860 283.5h8M860 284.5h11M860 285.5h4M860 286.5h19M860 287.5h17M860 288.5h12M860 289.5h13M860 290.5h10M860 291.5h10M860 292.5h9M860 293.5h9M860 294.5h11M860 295.5h9M860 296.5h3M860 297.5h8M860 298.5h10M860 299.5h4M860 300.5h17M860 303.5h16M860 304.5h15M860 305.5h20M860 306.5h16M860 307.5h17M860 308.5h15M860 309.5h12M860 310.5h3M860 311.5h11M860 312.5h11M860 313.5h12M860 314.5h16M860 315.5h20M860 316.5h17M860 317.5h15M860 318.5h15M860 319.5h16M860 320.5h20M860 321.5h13M860 322.5h8M860 323.5h9M860 324.5h12M860 325.5h10M860 326.5h11M860 327.5h12M860 328.5h11M860 329.5h11M860 330.5h12M860 331.5h8M860 332.5h10M860 333.5h1M860 334.5h8M860 335.5h6M860 336.5h12M860 337.5h14M860 338.5h19M860 339.5h18M860 340.5h4M860 341.5h12M860 342.5h3M860 343.5h10M860 344.5h9M860 345.5h3M860 346.5h12M860 347.5h4M860 348.5h6M860 349.5h6M860 350.5h3M860 351.5h17M860 352.5h12M860 353.5h13M860 354.5h3M860 355.5h8M860 356.5h9M860 357.5h15M860 358.5h11M860 359.5h10M860 360.5h9M860 364.5h12M860 365.5h11M860 366.5h16M860 367.5h3M860 368.5h8M860 369.5h8M860 370.5h2M860 371.5h3M860 372.5h6M860 373.5h16M860 374.5h11M860 375.5h12M860 376.5h14M860 377.5h4M860 378.5h12M860 379.5h16M860 380.5h4M860 381.5h15M860 382.5h15M860 383.5h17M860 384.5h15M860 385.5h8M860 386.5h10M860 387.5h1M860 388.5h2M860 389.5h15M860 390.5h4M860 391.5h8M860 392.5h8M860 393.5h7M860 394.5h12M860 395.5h19M860 396.5h11M860 397.5h16M860 398.5h10M860 399.5h9M860 400.5h12M860 401.5h3M860 402.5h10M860 403.5h14M860 404.5h9M860 405.5h5M860 406.5h12M860 409.5h14M860 410.5h13M860 411.5h11M860 412.5h10M860 413.5h15M860 414.5h11M860 415.5h11M860 416.5h10M860 417.5h15M860 418.5h16M860 419.5h13M860 420.5h4M860 421.5h14M860 422.5h16M860 423.5h4M860 424.5h15M860 425.5h14M860 426.5h15M860 427.5h3M860 428.5h11M860 429.5h4M860 430.5h13M860 431.5h15M860 432.5h21M860 433.5h21M860 434.5h19M860 435.5h4M860 436.5h17M860 437.5h11M860 438.5h13M860 439.5h3M860 440.5h3M860 444.5h4M860 445.5h6M860 446.5h8M860 447.5h17M860 448.5h12M860 449.5h7M860 450.5h1M860 451.5h5M860 452.5h9M860 453.5h4M860 454.5h14M860 455.5h15M860 456.5h16M860 457.5h4M860 458.5h4M860 459.5h13M860 460.5h12M860 461.5h12M860 462.5h11M860 463.5h9M860 464.5h9M860 465.5h18M860 466.5h12M860 467.5h14M860 468.5h16M860 469.5h16M860 470.5h14M860 471.5h13M860 472.5h11M860 473.5h9M860 474.5h10M860 475.5h4M860 476.5h5M860 477.5h15M860 478.5h12M860 479.5h10M860 480.5h11M860 481.5h15M860 482.5h13M860 483.5h12M860 484.5h12M860 485.5h11M860 486.5h12M860 487.5h15M860 488.5h11M860 489.5h12M860 490.5h5M860 491.5h3M860 492.5h1M860 493.5h7M860 494.5h9M860 495.5h9M860 496.5h10M860 497.5h11M860 498.5h17M860 499.5h14M860 500.5h12M860 501.5h13M860 502.5h15M860 503.5h19M860 504.5h4M860 505.5h10M860 506.5h12M860 507.5h10M860 508.5h9M860 509.5h7M860 510.5h7M860 511.5h1M860 512.5h6M860 513.5h7M860 514.5h2M860 515.5h4M860 516.5h3M860 519.5h15M860 520.5h15M860 521.5h14M860 522.5h12M860 523.5h10M860 524.5h10M860 525.5h11M860 526.5h12M860 527.5h19M860 528.5h13M860 529.5h12M860 530.5h12M860 531.5h13M860 532.5h19M860 533.5h13M860 534.5h14M860 535.5h17M860 536.5h14M860 540.5h2M860 541.5h4M860 542.5h16M860 543.5h17M860 544.5h14M860 545.5h16M860 546.5h15M860 547.5h13M860 548.5h14M860 549.5h14M860 550.5h3M860 551.5h12M860 554.5h14M860 555.5h14M860 556.5h14M860 557.5h13M860 558.5h15M860 559.5h12M860 560.5h11M860 561.5h15M860 562.5h10M860 563.5h17M860 564.5h12M860 565.5h12M860 566.5h11M860 567.5h19M860 568.5h3M860 569.5h12M860 573.5h16M860 574.5h5M860 575.5h19M860 576.5h18M860 577.5h19M860 578.5h12M860 579.5h10M860 580.5h10M860 581.5h11M860 582.5h15M860 583.5h17M860 584.5h11M860 585.5h10M860 586.5h9M860 587.5h8M860 588.5h9M860 589.5h10M860 590.5h18M860 591.5h16M860 592.5h14M860 593.5h15M860 594.5h11M860 595.5h9M860 596.5h2M860 597.5h7M860 598.5h2M860 599.5h15M860 600.5h13M860 601.5h4M860 602.5h13M860 603.5h18M860 604.5h10M860 605.5h11M860 606.5h13M860 607.5h14M860 608.5h19M860 609.5h15M860 610.5h15M860 611.5h15M860 612.5h15M860 613.5h14M860 614.5h14M860 615.5h14M860 616.5h13M860 617.5h14M860 618.5h14M860 619.5h19M860 620.5h15M860 621.5h10M860 622.5h3M860 623.5h1M860 624.5h13M860 625.5h12M860 626.5h19M860 627.5h13M860 628.5h11M860 629.5h12M860 630.5h11M860 631.5h5M860 632.5h6M860 633.5h12M860 634.5h3M860 635.5h11M860 636.5h16M860 637.5h15M860 638.5h17M860 639.5h19M860 640.5h4M860 641.5h12M860 642.5h10M860 643.5h13M860 644.5h9M860 645.5h9M860 646.5h10M860 647.5h11M860 648.5h16M860 649.5h16M860 650.5h15M860 651.5h15M860 652.5h14M860 655.5h16M860 656.5h14M860 657.5h12M860 658.5h11M860 659.5h13M860 660.5h2M860 661.5h6M860 662.5h4M860 663.5h7M860 664.5h9M860 665.5h12M860 666.5h4M860 667.5h5M860 668.5h15M860 669.5h17M860 670.5h8M860 671.5h9M860 672.5h15M860 673.5h8M860 674.5h7M860 675.5h3M860 676.5h2M860 677.5h10M860 678.5h11M860 679.5h10M860 680.5h11M860 681.5h16M860 682.5h11M860 683.5h3M860 684.5h16M860 685.5h12M860 686.5h10M860 687.5h9M860 688.5h8M860 689.5h15M860 690.5h10M860 691.5h12M860 695.5h9M860 696.5h8M860 697.5h10M860 698.5h16M860 699.5h13M860 700.5h15M860 701.5h15M860 702.5h16M860 703.5h8M860 704.5h2M860 705.5h4M860 706.5h6M860 707.5h13M860 708.5h9M860 709.5h9M860 710.5h10M860 711.5h3M860 712.5h11M860 713.5h12M860 714.5h11M860 715.5h10M860 716.5h8M860 717.5h8M860 718.5h2M860 719.5h8M860 720.5h12M860 721.5h12M860 722.5h18M860 723.5h12M860 724.5h3M860 725.5h16M860 726.5h9M860 727.5h7M860 728.5h12M860 729.5h6M860 730.5h1M860 731.5h6M860 732.5h15M860 733.5h11M860 734.5h10M860 735.5h1M860 736.5h1M860 737.5h7M860 738.5h2M860 739.5h2M860 740.5h10M860 741.5h15M860 742.5h11M860 743.5h17M860 744.5h12M860 745.5h17M860 746.5h16M860 747.5h16M860 748.5h16M860 749.5h12M860 750.5h10M860 751.5h14M860 752.5h15M860 753.5h23M860 754.5h5M860 755.5h22M860 758.5h13M860 759.5h11M860 760.5h10M860 761.5h3M860 762.5h9M860 763.5h2M860 764.5h3M860 765.5h2M860 766.5h6M860 767.5h6M860 769.5h6M860 772.5h1M860 773.5h1M860 774.5h1M860 775.5h5M860 776.5h3" stroke="#000" stroke-width="1" fill="none"/>
<path d="M860 26.5h22M860 27.5h19M860 95.5h19M860 96.5h23M860 120.5h17M860 121.5h6M860 122.5h22M860 164.5h13M860 165.5h21M860 166.5h19M860 171.5h5M860 172.5h5M860 173.5h19M860 185.5h20M860 186.5h6M860 187.5h17M860 278.5h19M860 279.5h26M860 301.5h18M860 302.5h17M860 361.5h12M860 362.5h15M860 363.5h14M860 407.5h17M860 408.5h15M860 441.5h14M860 442.5h17M860 443.5h11M860 517.5h19M860 518.5h15M860 537.5h14M860 538.5h14M860 539.5h8M860 552.5h15M860 553.5h15M860 570.5h15M860 571.5h23M860 572.5h17M860 653.5h14M860 654.5h14M860 692.5h14M860 693.5h16M860 694.5h16M860 756.5h16M860 757.5h15" stroke="#07072a" stroke-width="1" fill="none"/>
<rect x="860" y="19" width="80" height="1" fill="#9a9a9a"/>
<rect x="860" y="97" width="80" height="1" fill="#9a9a9a"/>
<rect x="860" y="175" width="80" height="1" fill="#9a9a9a"/>
<rect x="860" y="253" width="80" height="1" fill="#9a9a9a"/>
<rect x="860" y="331" width="80" height="1" fill="#9a9a9a"/>
<rect x="860" y="409" width="80" height="1" fill="#9a9a9a"/>
<rect x="860" y="487" width="80" height="1" fill="#9a9a9a"/>
<rect x="860" y="565" width="80" height="1" fill="#9a9a9a"/>
<rect x="860" y="643" width="80" height="1" fill="#9a9a9a"/>
<rect x="860" y="721" width="80" height="1" fill="#9a9a9a"/>
</g>
<defs><linearGradient id="sb" x1="860" x2="909" y1="0" y2="0" gradientUnits="userSpaceOnUse"><stop offset="0" stop-color="#b050a0"/><stop offset="0.35" stop-color="#903080"/><stop offset="0.6" stop-color="#a02060"/><stop offset="0.7" stop-color="#e01818"/><stop offset="0.82" stop-color="#e02020"/><stop offset="0.84" stop-color="#d07030"/><stop offset="1" stop-color="#c08040"/></linearGradient></defs>
<rect x="860" y="204" width="34" height="5" fill="#1a0830"/>
<rect x="860" y="205.5" width="40" height="2.4" fill="url(#sb)"/>
<rect x="893" y="205" width="8" height="3.6" fill="#e01818"/>
<rect x="900" y="206.3" width="9" height="1" fill="#c87838"/>
<g clip-path="url(#pnl)" fill="none" stroke-linejoin="round">
<path d="M860.5 1.0 L860.5 13.0 L862.0 18.0 L866.0 25.0 L869.0 32.0 L869.0 40.0 L870.5 50.0 L869.0 60.0 L870.5 70.0 L872.0 80.0 L870.0 90.0 L869.8 97.0 L871.7 110.0 L870.0 125.0 L872.0 133.0 L870.0 140.0 L868.5 150.0 L872.0 160.0 L870.0 165.0 L871.7 175.0 L869.0 183.0 L873.6 188.0 L876.0 191.0 L881.0 195.0 L873.0 200.0 L878.7 203.5 L899.0 205.5 L900.0 207.0 L878.7 209.5 L875.5 215.0 L880.0 222.0 L885.0 229.0 L882.5 236.0 L876.0 243.0 L873.0 250.0 L876.8 255.0 L869.8 262.0 L868.5 270.0 L869.8 280.0 L870.3 284.0 L870.8 288.4 L870.7 293.2 L868.4 298.0 L871.3 301.7 L871.2 305.8 L869.8 308.6 L870.0 311.7 L868.3 315.6 L869.2 318.7 L870.8 323.5 L870.9 326.4 L870.3 329.2 L868.3 332.0 L869.0 336.7 L871.4 339.7 L869.2 344.4 L870.0 349.3 L869.0 353.5 L870.5 358.4 L871.2 363.3 L869.5 366.5 L868.8 369.5 L869.3 372.1 L868.3 376.1 L869.4 380.3 L870.9 383.6 L869.3 387.3 L870.6 391.0 L871.4 393.6 L870.7 396.2 L868.4 400.8 L869.5 405.3 L868.3 409.2 L868.9 411.8 L868.9 416.7 L871.3 421.1 L869.4 426.0 L870.0 429.4 L868.6 433.8 L870.9 438.2 L868.4 442.8 L868.6 447.7 L870.3 451.0 L869.4 455.8 L870.0 460.7 L869.3 463.9 L868.6 466.9 L870.5 469.7 L868.8 474.7 L871.5 477.4 L869.6 481.2 L870.2 484.3 L869.8 488.9 L868.5 492.4 L868.4 497.2 L871.0 500.9 L870.6 503.8 L870.3 508.6 L868.6 513.1 L868.8 516.7 L869.2 521.3 L871.5 524.9 L871.4 529.6 L869.9 533.2 L869.8 537.5 L869.6 540.7 L869.5 543.6 L871.4 548.6 L869.9 552.7 L868.6 556.0 L870.8 559.2 L869.5 563.8 L870.8 568.3 L870.4 572.6 L869.5 577.0 L869.2 581.2 L870.8 584.9 L869.2 589.2 L870.4 594.0 L868.3 598.0 L869.1 601.8 L869.8 606.0 L870.4 610.6 L869.4 615.1 L870.7 619.2 L869.4 623.7 L871.1 628.3 L871.4 632.6 L870.0 637.5 L868.8 641.3 L871.3 645.9 L870.5 649.6 L870.6 653.9 L870.8 656.8 L870.4 660.7 L870.3 664.3 L870.3 668.7 L868.4 673.0 L869.7 675.9 L869.0 680.1 L870.3 684.3 L869.8 686.9 L868.5 689.9 L869.3 692.8 L868.9 695.7 L869.8 698.3 L870.3 701.8 L869.1 705.7 L868.3 710.5 L869.2 714.0 L868.7 717.5 L869.5 722.1 L870.3 724.7 L870.0 727.4 L870.2 730.8 L870.9 735.7 L870.9 739.2 L869.5 743.3 L870.2 746.2 L871.4 750.1 L870.2 755.0 L869.4 760.0 L866.0 770.0 L862.7 776.0 L860.0 779.5" stroke="#c42c2c" stroke-width="1.45"/>
<circle cx="873.5" cy="46" r="3" fill="#1a0000" stroke="#c62a2a" stroke-width="1.5"/>
<path d="M860.0 13.0 L871.0 17.0 L880.0 25.0 L884.0 27.0 L889.6 32.0 L883.8 40.0 L892.0 48.0 L887.6 52.0 L892.0 57.0 L881.0 60.0 L891.5 64.0 L887.0 71.0 L896.6 74.0 L893.0 80.0 L891.0 84.0 L897.0 91.0 L889.6 97.0 L896.6 100.0 L892.8 103.0 L901.0 109.0 L898.5 113.0 L902.3 118.0 L896.6 122.5 L901.7 124.5 L899.8 127.0 L903.0 132.0 L906.0 137.0 L904.0 144.0 L908.7 152.0 L906.0 160.0 L910.6 169.0 L908.7 175.0 L905.3 178.0 L905.3 183.0 L917.0 187.0 L931.0 195.0 L924.7 197.0 L905.5 199.5 L926.0 203.0 L929.8 207.0 L926.6 211.0 L920.9 216.0 L930.0 222.0 L938.0 229.0 L933.6 236.0 L923.4 243.0 L926.0 245.0 L916.4 250.0 L926.6 254.0 L924.7 257.0 L901.7 261.0 L909.4 262.0 L895.0 266.0 L883.8 270.5 L895.3 275.0 L890.8 277.0 L899.0 280.0 L895.0 283.0 L899.8 286.0 L893.4 290.0 L899.8 294.0 L893.4 297.0 L899.0 300.0 L894.0 303.0 L901.7 308.0 L899.0 313.0 L894.0 318.0 L888.0 322.0 L883.0 325.0 L883.8 328.0 L889.6 329.0 L884.0 333.0 L880.6 337.0 L885.7 340.0 L881.9 345.0 L885.0 348.0 L882.5 352.0 L888.3 356.0 L882.5 360.0 L881.0 363.0 L887.6 369.0 L883.2 372.0 L884.1 374.5 L885.9 377.0 L881.7 378.7 L883.4 381.7 L888.4 383.7 L887.3 386.0 L885.9 388.4 L885.9 390.2 L885.2 393.2 L886.2 396.0 L886.8 397.7 L883.6 400.2 L887.5 401.9 L886.5 404.2 L886.5 407.2 L884.3 410.3 L884.6 413.2 L887.6 416.3 L882.5 418.1 L888.2 420.0 L885.9 422.3 L885.0 424.4 L884.0 426.6 L885.6 429.1 L886.2 432.2 L887.4 435.3 L886.2 438.5 L887.5 440.3 L887.8 443.5 L886.5 446.0 L887.3 447.9 L883.5 450.4 L887.4 452.1 L882.2 455.3 L884.4 458.2 L883.6 460.0 L887.5 462.9 L885.8 464.5 L886.5 466.2 L887.6 468.3 L885.0 471.5 L883.7 474.7 L885.7 476.4 L882.9 478.1 L887.3 480.3 L883.4 482.2 L885.2 485.2 L889.2 488.3 L886.2 490.5 L887.5 492.9 L886.9 495.5 L889.5 498.1 L886.0 500.5 L884.7 503.2 L889.7 505.3 L886.8 507.8 L885.9 509.4 L883.2 511.9 L887.4 514.5 L887.4 516.2 L887.7 518.5 L887.9 520.7 L883.3 523.5 L887.7 525.2 L884.8 528.3 L887.1 530.6 L885.6 532.8 L885.6 534.9 L885.1 537.4 L888.4 539.6 L887.0 541.3 L885.2 544.0 L888.6 546.0 L884.4 548.0 L887.8 550.3 L885.3 552.0 L888.8 554.2 L888.9 556.5 L885.4 558.3 L887.6 561.0 L883.1 563.3 L885.2 565.1 L887.1 567.0 L882.8 569.9 L887.1 572.0 L887.1 574.6 L882.5 576.8 L887.0 578.8 L884.0 580.9 L884.5 583.1 L887.9 585.4 L881.6 587.2 L887.6 590.3 L884.6 593.5 L887.9 596.6 L886.7 598.6 L886.1 601.5 L883.6 604.0 L883.1 606.1 L885.6 607.8 L887.1 609.9 L887.7 611.6 L887.9 614.3 L887.7 617.3 L881.7 619.8 L882.8 622.6 L886.1 624.7 L884.4 627.1 L885.8 630.2 L883.3 632.4 L884.8 635.4 L884.0 638.2 L885.2 640.1 L882.8 643.0 L887.9 645.9 L887.2 648.8 L885.9 650.4 L881.9 653.4 L883.4 655.4 L884.5 657.9 L886.9 660.2 L882.0 661.8 L882.4 663.6 L888.2 665.3 L882.2 668.3 L883.7 670.7 L884.0 672.8 L885.6 675.4 L882.9 677.6 L882.4 679.8 L886.5 682.2 L882.1 684.4 L884.1 686.3 L886.9 688.9 L887.0 691.1 L884.5 693.7 L885.0 695.9 L884.5 698.6 L884.7 701.3 L885.2 703.3 L882.1 706.0 L884.5 708.3 L888.0 711.3 L887.7 713.5 L883.4 716.4 L882.4 718.7 L886.1 721.6 L887.0 724.7 L886.6 727.3 L882.3 729.8 L881.6 732.4 L886.9 734.2 L882.2 735.9 L887.6 737.6 L881.8 739.5 L882.4 742.5 L886.2 745.4 L888.1 748.3 L887.0 750.9 L886.8 752.5 L886.5 755.0 L886.7 756.7 L882.0 759.8 L885.4 761.9 L881.6 765.0 L879.3 771.0 L880.0 774.5 L872.0 779.0 L867.0 782.0 L864.0 784.0" stroke="#2edc2e" stroke-width="1.1"/>
<path d="M934 783 Q936 779 941 778" stroke="#2edc2e" stroke-width="1.1"/>
</g>
</svg></body></html>
